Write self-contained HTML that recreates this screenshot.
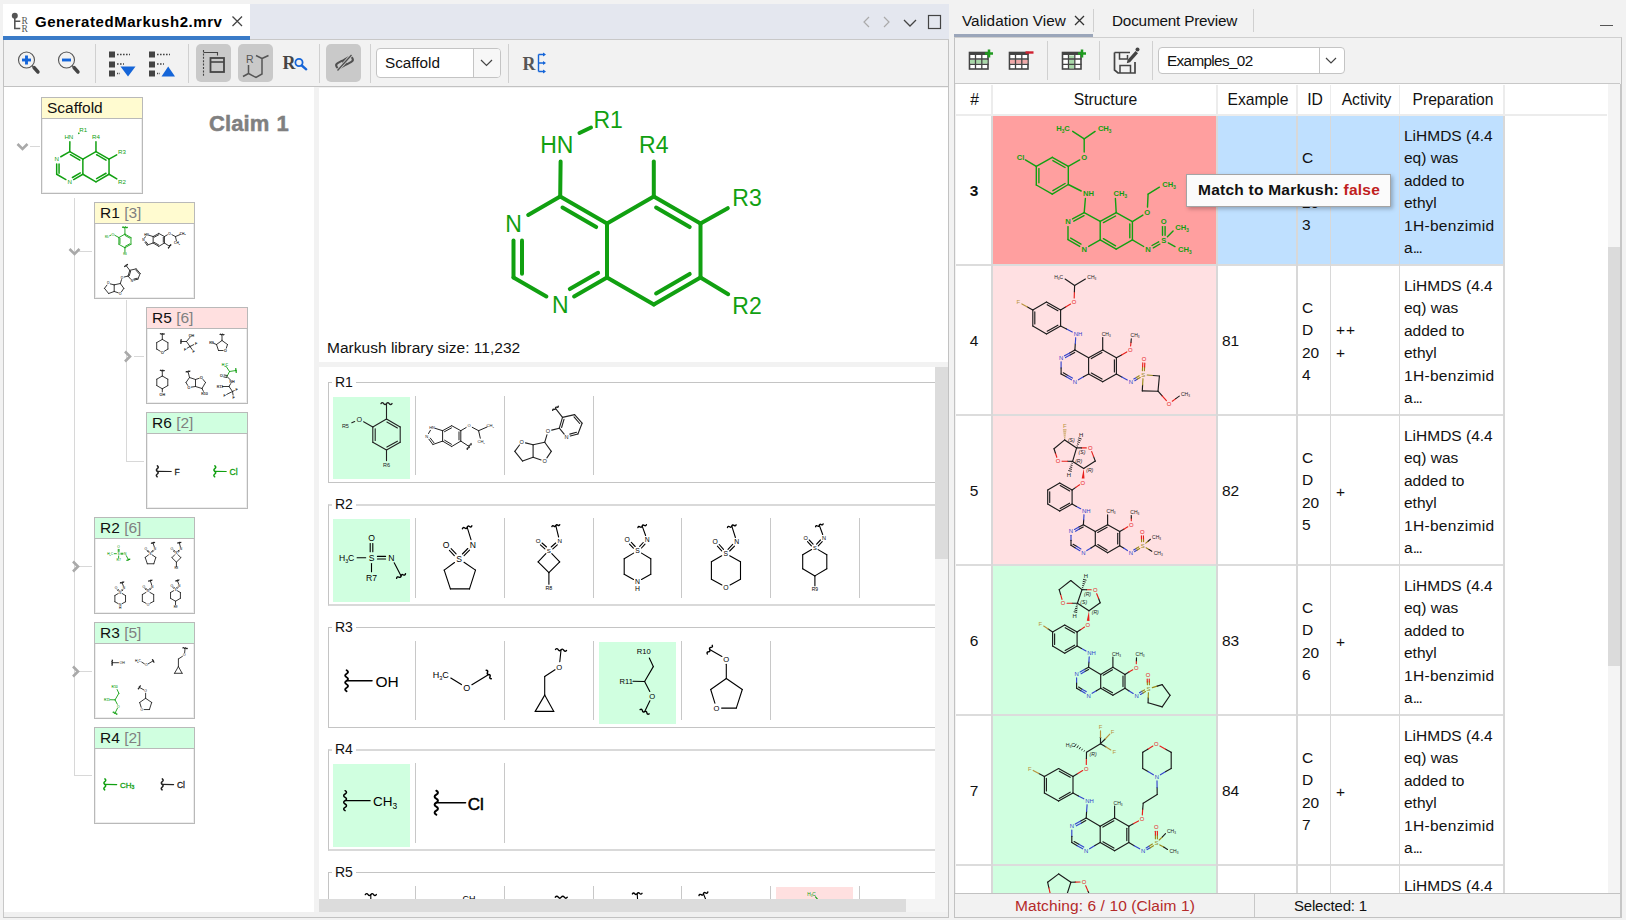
<!DOCTYPE html>
<html><head><meta charset="utf-8"><title>Markush Editor</title>
<style>

*{box-sizing:border-box;margin:0;padding:0}
html,body{width:1626px;height:920px;overflow:hidden;background:#f2f2f2;font-family:"Liberation Sans",sans-serif;font-size:15px;color:#111}
.abs{position:absolute}
div,span,svg{position:absolute}
svg{overflow:visible}
.t{white-space:nowrap;line-height:1}
.sep{width:1px;background:#d0d0d0}
.box{border:1px solid #b9b9b9;background:#fff;box-shadow:inset 0 0 0 1px #ededed}
.hd{left:0;top:0;right:0;height:21px;border-bottom:1px solid #b9b9b9}
.hd .t{left:5px;top:2px;font-size:15.5px}
.hd .n{color:#808080}
.grp{border:1px solid #c4c4c4;border-right:none}
.grp .t{left:3px;top:-8px;background:#fff;padding:0 3px;font-size:14px}
.cs{width:1px;background:#c8c8c8;height:79px}
.cell{width:77px;height:82px}
td,th{}

</style></head>
<body>
<div style="left:3px;top:4px;width:946px;height:36px;background:#e4e7ef"></div>
<div style="left:3px;top:4px;width:247px;height:33px;background:#fff"></div>
<div style="left:3px;top:36px;width:247px;height:4px;background:#3a7bc8"></div>
<div style="left:250px;top:39px;width:699px;height:1px;background:#c8c8c8"></div>
<svg style="left:10px;top:11px" width="22" height="22" viewBox="0 0 22 22"><circle cx="4.8" cy="4.7" r="3" fill="#555"/><path d="M4.8 5v12.5h5.5M4.8 10.3h5.5" stroke="#555" stroke-width="1.6" fill="none"/><text x="11.500" y="12.500" font-family="Liberation Serif,serif" font-size="9.500" fill="#555">R</text><text x="11.500" y="20.500" font-family="Liberation Serif,serif" font-size="9.500" fill="#555">R</text></svg>
<span class="t" id="tabtitle" style="left:35px;top:14px;font-size:15px;font-weight:bold;letter-spacing:0.55px;color:#000">GeneratedMarkush2.mrv</span>
<svg style="left:232px;top:16px" width="12" height="12"><path d="M0.500 0.500l9.500 9.500M10 0.500L0.500 10" stroke="#444" stroke-width="1.300"/></svg>
<svg style="left:858px;top:12px" width="90" height="20"><path d="M11 5l-5 5 5 5" stroke="#aaa" stroke-width="1.2" fill="none"/><path d="M26 5l5 5-5 5" stroke="#aaa" stroke-width="1.2" fill="none"/><path d="M46 8l6 6 6-6" stroke="#444" stroke-width="1.3" fill="none"/><rect x="70.5" y="3.5" width="12" height="13" stroke="#444" stroke-width="1.2" fill="none"/></svg>
<div style="left:3px;top:40px;width:946px;height:47px;background:#f2f2f2;border-bottom:1px solid #c2c2c2;border-left:1px solid #c2c2c2;border-right:1px solid #c2c2c2"></div>
<svg style="left:15px;top:49px" width="30" height="30"><circle cx="11.5" cy="11" r="8" fill="none" stroke="#555" stroke-width="1.1"/><path d="M19 18.500l4 4.500" stroke="#444" stroke-width="3.400" stroke-linecap="round"/><path d="M17 16.500l2 2" stroke="#555" stroke-width="1.200"/><path d="M7 11h9" stroke="#1565d8" stroke-width="2.900"/><path d="M11.500 6.500v9" stroke="#1565d8" stroke-width="2.900"/></svg>
<svg style="left:55px;top:49px" width="30" height="30"><circle cx="11.5" cy="11" r="8" fill="none" stroke="#555" stroke-width="1.1"/><path d="M19 18.500l4 4.500" stroke="#444" stroke-width="3.400" stroke-linecap="round"/><path d="M17 16.500l2 2" stroke="#555" stroke-width="1.200"/><path d="M7 11h9" stroke="#1565d8" stroke-width="2.900"/></svg>
<div class="sep" style="left:95px;top:44px;height:39px"></div>
<div class="sep" style="left:188px;top:44px;height:39px"></div>
<div class="sep" style="left:319px;top:44px;height:39px"></div>
<div class="sep" style="left:370px;top:44px;height:39px"></div>
<div class="sep" style="left:508px;top:44px;height:39px"></div>
<svg style="left:109px;top:50px" width="30" height="28"><rect x="0" y="1.5" width="6" height="6" fill="#444"/><rect x="0" y="11.5" width="6" height="6" fill="#444"/><rect x="0" y="20.5" width="6" height="6" fill="#444"/><path d="M8 4.5h13" stroke="#444" stroke-width="1.6" stroke-dasharray="1.6 1.4"/><path d="M8 14h7" stroke="#444" stroke-width="1.6" stroke-dasharray="1.6 1.4"/><path d="M8 23.5h3" stroke="#444" stroke-width="1.6" stroke-dasharray="1.2 1.2"/><path d="M11.5 16.5h15L19 26.5z" fill="#1565d8"/></svg>
<svg style="left:149px;top:50px" width="30" height="28"><rect x="0" y="1.5" width="6" height="6" fill="#444"/><rect x="0" y="11.5" width="6" height="6" fill="#444"/><rect x="0" y="20.5" width="6" height="6" fill="#444"/><path d="M8 4.5h13" stroke="#444" stroke-width="1.6" stroke-dasharray="1.6 1.4"/><path d="M8 14h7" stroke="#444" stroke-width="1.6" stroke-dasharray="1.6 1.4"/><path d="M8 23.5h3" stroke="#444" stroke-width="1.6" stroke-dasharray="1.2 1.2"/><path d="M12.5 26.5h13.5L19.2 16.5z" fill="#1565d8"/></svg>
<div style="left:196px;top:44px;width:35px;height:38px;background:#c9c9c9;border-radius:5px"></div>
<div style="left:238px;top:44px;width:35px;height:38px;background:#c9c9c9;border-radius:5px"></div>
<div style="left:326px;top:44px;width:35px;height:38px;background:#c9c9c9;border-radius:5px"></div>
<svg style="left:196px;top:44px" width="35" height="38"><path d="M7.5 6v27" stroke="#444" stroke-width="1.1" stroke-dasharray="2 1.4"/><path d="M7.5 8.5h14v3" stroke="#444" stroke-width="1.1" fill="none"/><rect x="14.5" y="14" width="13.5" height="14" fill="none" stroke="#444" stroke-width="1.8"/><path d="M14.5 18h13.5" stroke="#444" stroke-width="1.6"/></svg>
<svg style="left:238px;top:44px" width="35" height="38"><text x="8" y="18.5" font-size="10.5" fill="#555">R</text><path d="M10.5 21v8.5l7.5 4 6-3.5V14.5l-6-3M10.5 29.5l-5.5 3M24 14.5l6.5-3" stroke="#555" stroke-width="1.5" fill="none"/></svg>
<svg style="left:280px;top:50px" width="30" height="26"><text x="2.5" y="19" font-family="Liberation Serif,serif" font-weight="bold" font-size="18" fill="#444">R</text><circle cx="19" cy="12.5" r="3.6" fill="none" stroke="#1565d8" stroke-width="1.8"/><path d="M21.8 15.5l4.4 3.8" stroke="#1565d8" stroke-width="2.4" stroke-linecap="round"/></svg>
<svg style="left:326px;top:44px" width="35" height="38"><g transform="rotate(-28 18.500 18.500)" fill="none" stroke="#505050" stroke-width="2"><rect x="9.500" y="15.800" width="10" height="5.400" rx="2.700"/><rect x="17.500" y="15.800" width="10" height="5.400" rx="2.700"/></g><path d="M11.500 26.500L25.500 11" stroke="#c9c9c9" stroke-width="3.200"/><path d="M11.500 26.500L25.500 11" stroke="#505050" stroke-width="1.300"/></svg>
<div style="left:376px;top:48px;width:125px;height:30px;background:#fff;border:1px solid #c4c4c4;border-radius:4px"></div>
<div style="left:473px;top:49px;width:1px;height:28px;background:#c4c4c4"></div>
<div style="left:474px;top:49px;width:26px;height:28px;background:#f7f7f7;border-radius:0 3px 3px 0"></div>
<span class="t" style="left:385px;top:55px;font-size:15.3px;color:#111">Scaffold</span>
<svg style="left:479px;top:57px" width="16" height="12"><path d="M2 3l5.5 5.5L13 3" stroke="#444" stroke-width="1.2" fill="none"/></svg>
<svg style="left:520px;top:50px" width="30" height="26"><text x="2.5" y="19.5" font-family="Liberation Serif,serif" font-weight="bold" font-size="18" fill="#555">R</text><path d="M18.5 4.500v17M18.500 4.500h6M18.500 13h6M18.5 21.500h6" stroke="#1565d8" stroke-width="1.4" fill="none"/><path d="M23 2.500l3 2-3 2zM23 11l3 2-3 2zM23 19.500l3 2-3 2z" fill="#1565d8"/></svg>
<div style="left:3px;top:87px;width:311px;height:830px;background:#fff;border-left:1px solid #c8c8c8"></div>
<div style="left:3px;top:912px;width:946px;height:6px;background:#f0f0f0;border-bottom:1px solid #c2c2c2;border-left:1px solid #c8c8c8"></div>
<span class="t" style="left:209px;top:112.500px;font-size:22px;font-weight:bold;color:#808080;-webkit-text-stroke:0.500px #808080;letter-spacing:0.100px;word-spacing:1px" id="claim">Claim 1</span>
<div style="left:30px;top:146px;width:10px;height:1px;background:#d8d8d8"></div>
<div style="left:74px;top:198px;width:1px;height:578px;background:#d8d8d8"></div>
<div style="left:79px;top:251px;width:13px;height:1px;background:#d8d8d8"></div>
<div style="left:79px;top:566px;width:13px;height:1px;background:#d8d8d8"></div>
<div style="left:79px;top:671px;width:13px;height:1px;background:#d8d8d8"></div>
<div style="left:74px;top:775px;width:18px;height:1px;background:#d8d8d8"></div>
<div style="left:126px;top:300px;width:1px;height:162px;background:#d8d8d8"></div>
<div style="left:134px;top:356px;width:10px;height:1px;background:#d8d8d8"></div>
<div style="left:126px;top:461px;width:18px;height:1px;background:#d8d8d8"></div>
<svg style="left:16px;top:142px" width="14" height="10"><path d="M1.5 2l5 5 5-5" stroke="#a9a9a9" stroke-width="2.600" fill="none"/></svg>
<svg style="left:68px;top:247px" width="14" height="10"><path d="M1.5 2l5 5 5-5" stroke="#a9a9a9" stroke-width="2.600" fill="none"/></svg>
<svg style="left:123px;top:350px" width="10" height="14"><path d="M2 1.500l5 5-5 5" stroke="#a9a9a9" stroke-width="2.600" fill="none"/></svg>
<svg style="left:71px;top:560px" width="10" height="14"><path d="M2 1.500l5 5-5 5" stroke="#a9a9a9" stroke-width="2.600" fill="none"/></svg>
<svg style="left:71px;top:665px" width="10" height="14"><path d="M2 1.500l5 5-5 5" stroke="#a9a9a9" stroke-width="2.600" fill="none"/></svg>
<div class="box" style="left:41px;top:97px;width:102px;height:97px"><div class="hd" style="background:#fffbd0"><span class="t">Scaffold</span></div><svg style="left:-42px;top:-98px" width="10" height="10"><g transform="translate(90.7,156.2) scale(0.28) translate(-635,-213)" stroke-linecap="round" fill="none"><line x1="560.2" y1="196.5" x2="528.2" y2="215" stroke="#11a011" stroke-width="5.36"/><line x1="513.5" y1="240.5" x2="513.5" y2="277.5" stroke="#11a011" stroke-width="5.36"/><line x1="522" y1="240.5" x2="522" y2="273.8" stroke="#11a011" stroke-width="5.36"/><line x1="513.5" y1="277.5" x2="546.4" y2="296.5" stroke="#11a011" stroke-width="5.36"/><line x1="574.1" y1="296.5" x2="607" y2="277.5" stroke="#11a011" stroke-width="5.36"/><line x1="569.8" y1="289.1" x2="598.1" y2="272.8" stroke="#11a011" stroke-width="5.36"/><line x1="607" y1="277.5" x2="607" y2="223.5" stroke="#11a011" stroke-width="5.36"/><line x1="607" y1="223.5" x2="560.2" y2="196.5" stroke="#11a011" stroke-width="5.36"/><line x1="596.2" y1="227.1" x2="562.5" y2="207.6" stroke="#11a011" stroke-width="5.36"/><line x1="607" y1="223.5" x2="653.8" y2="196.5" stroke="#11a011" stroke-width="5.36"/><line x1="653.8" y1="196.5" x2="700.5" y2="223.5" stroke="#11a011" stroke-width="5.36"/><line x1="656.1" y1="207.6" x2="689.7" y2="227.1" stroke="#11a011" stroke-width="5.36"/><line x1="700.5" y1="223.5" x2="700.5" y2="277.5" stroke="#11a011" stroke-width="5.36"/><line x1="700.5" y1="277.5" x2="653.8" y2="304.5" stroke="#11a011" stroke-width="5.36"/><line x1="689.7" y1="273.9" x2="656.1" y2="293.4" stroke="#11a011" stroke-width="5.36"/><line x1="653.8" y1="304.5" x2="607" y2="277.5" stroke="#11a011" stroke-width="5.36"/><line x1="560.2" y1="196.5" x2="560.6" y2="161.5" stroke="#11a011" stroke-width="5.36"/><line x1="653.8" y1="196.5" x2="653.8" y2="161.5" stroke="#11a011" stroke-width="5.36"/><line x1="700.5" y1="223.5" x2="727.8" y2="208.2" stroke="#11a011" stroke-width="5.36"/><line x1="700.5" y1="277.5" x2="728.2" y2="294.2" stroke="#11a011" stroke-width="5.36"/><text x="513.5" y="231.5" font-size="22.1" fill="#11a011" stroke="none" text-anchor="middle">N</text><text x="560.2" y="312.5" font-size="22.1" fill="#11a011" stroke="none" text-anchor="middle">N</text><text x="557" y="152.5" font-size="22.1" fill="#11a011" stroke="none" text-anchor="middle">HN</text><text x="608.2" y="127.5" font-size="22.1" fill="#11a011" stroke="none" text-anchor="middle">R1</text><text x="653.8" y="152.5" font-size="22.1" fill="#11a011" stroke="none" text-anchor="middle">R4</text><text x="747" y="205.5" font-size="22.1" fill="#11a011" stroke="none" text-anchor="middle">R3</text><text x="747" y="313.5" font-size="22.1" fill="#11a011" stroke="none" text-anchor="middle">R2</text></g><line x1="78.200" y1="133.600" x2="79.400" y2="133" stroke="#11a011" stroke-width="1.500"/></svg></div>
<div class="box" style="left:94px;top:202px;width:101px;height:97px"><div class="hd" style="background:#fffbd0"><span class="t">R1 <span class="n" style="position:static">[3]</span></span></div><svg style="left:-95px;top:-203px" width="10" height="10"><g transform="translate(118.9,240.8) scale(0.44) translate(-372.8,-434.3)" stroke-linecap="round" fill="none"><line x1="386.5" y1="419.1" x2="400.2" y2="426.9" stroke="#11a011" stroke-width="2.05"/><line x1="386.9" y1="422.1" x2="397.4" y2="428" stroke="#11a011" stroke-width="2.05"/><line x1="400.2" y1="426.9" x2="400.2" y2="442.3" stroke="#11a011" stroke-width="2.05"/><line x1="400.2" y1="442.3" x2="386.5" y2="450.1" stroke="#11a011" stroke-width="2.05"/><line x1="397.4" y1="441.2" x2="386.9" y2="447.1" stroke="#11a011" stroke-width="2.05"/><line x1="386.5" y1="450.1" x2="372.8" y2="442.3" stroke="#11a011" stroke-width="2.05"/><line x1="372.8" y1="442.3" x2="372.8" y2="426.9" stroke="#11a011" stroke-width="2.05"/><line x1="375.2" y1="440.5" x2="375.2" y2="428.7" stroke="#11a011" stroke-width="2.05"/><line x1="372.8" y1="426.9" x2="386.5" y2="419.1" stroke="#11a011" stroke-width="2.05"/><line x1="386.5" y1="419.1" x2="386.5" y2="403.6" stroke="#11a011" stroke-width="2.05"/><path d="M392 403.6 Q390.6 405.5 389.2 403.6 Q387.8 401.7 386.5 403.6 Q385.1 405.5 383.7 403.6 Q382.3 401.7 381 403.6" stroke="#11a011" stroke-width="2.56"/><line x1="372.8" y1="426.9" x2="363.6" y2="421.8" stroke="#11a011" stroke-width="2.05"/><line x1="354.7" y1="421.5" x2="351.8" y2="422.8" stroke="#11a011" stroke-width="2.05"/><line x1="386.5" y1="450.1" x2="386.5" y2="460.1" stroke="#11a011" stroke-width="2.05"/><text x="359.2" y="422.3" font-size="8" fill="#11a011" stroke="#11a011" text-anchor="middle" stroke-width="0.12">O</text><text x="345.4" y="427.9" font-size="6.2" fill="#11a011" stroke="#11a011" text-anchor="middle" stroke-width="0.12">R5</text><text x="386.5" y="467.3" font-size="6.2" fill="#11a011" stroke="#11a011" text-anchor="middle" stroke-width="0.12">R6</text></g><g transform="translate(163,239.9) scale(0.62) translate(-458.5,-436.1)" stroke-linecap="round" fill="none"><line x1="451.7" y1="425.7" x2="460.8" y2="430.7" stroke="#222" stroke-width="1.45"/><line x1="460.8" y1="430.7" x2="460.8" y2="441.1" stroke="#222" stroke-width="1.45"/><line x1="459" y1="431.9" x2="459" y2="439.9" stroke="#222" stroke-width="1.45"/><line x1="460.8" y1="441.1" x2="451.7" y2="446.5" stroke="#222" stroke-width="1.45"/><line x1="451.7" y1="446.5" x2="442.6" y2="441.1" stroke="#222" stroke-width="1.45"/><line x1="451.5" y1="444.3" x2="444.6" y2="440.2" stroke="#222" stroke-width="1.45"/><line x1="442.6" y1="441.1" x2="442.6" y2="430.7" stroke="#222" stroke-width="1.45"/><line x1="442.6" y1="430.7" x2="451.7" y2="425.7" stroke="#222" stroke-width="1.45"/><line x1="444.5" y1="431.7" x2="451.5" y2="427.9" stroke="#222" stroke-width="1.45"/><line x1="442.6" y1="430.7" x2="436.2" y2="428.7" stroke="#222" stroke-width="1.45"/><line x1="430" y1="431.1" x2="429" y2="432.8" stroke="#222" stroke-width="1.45"/><line x1="429.4" y1="439.9" x2="432.9" y2="444.5" stroke="#222" stroke-width="1.45"/><line x1="430.8" y1="438.8" x2="434" y2="442.8" stroke="#222" stroke-width="1.45"/><line x1="432.9" y1="444.5" x2="442.6" y2="441.1" stroke="#222" stroke-width="1.45"/><line x1="460.8" y1="430.7" x2="465.5" y2="427.9" stroke="#222" stroke-width="1.45"/><line x1="472.9" y1="427.7" x2="478.6" y2="430.7" stroke="#222" stroke-width="1.45"/><line x1="478.6" y1="430.7" x2="486.3" y2="427.4" stroke="#222" stroke-width="1.45"/><line x1="478.6" y1="430.7" x2="480.1" y2="437.3" stroke="#222" stroke-width="1.45"/><line x1="460.8" y1="441.1" x2="469.1" y2="446.5" stroke="#222" stroke-width="1.45"/><path d="M467.3 449.4 Q466.7 448 468.2 447.9 Q469.7 447.8 469.1 446.5 Q468.6 445.1 470.1 445 Q471.6 444.9 471 443.5" stroke="#222" stroke-width="1.81"/><text x="432.1" y="429.2" font-size="5.2" fill="#222" stroke="#222" text-anchor="middle" stroke-width="0.12">HN</text><text x="426.8" y="438.4" font-size="5.2" fill="#222" stroke="#222" text-anchor="middle" stroke-width="0.12">N</text><text x="469.1" y="427.6" font-size="5.2" fill="#222" stroke="#222" text-anchor="middle" stroke-width="0.12">O</text><text x="490.2" y="427.6" font-size="5.2" fill="#222" stroke="#222" text-anchor="middle" stroke-width="0.12">CH<tspan font-size="3.2" dy="1.1">3</tspan></text><text x="481.1" y="443.3" font-size="5.2" fill="#222" stroke="#222" text-anchor="middle" stroke-width="0.12">CH<tspan font-size="3.2" dy="1.1">3</tspan></text></g><g transform="translate(122.3,279.5) scale(0.53) translate(-548.4,-434.7)" stroke-linecap="round" fill="none"><line x1="562.5" y1="417.4" x2="574.6" y2="414.6" stroke="#222" stroke-width="1.7"/><line x1="574.6" y1="414.6" x2="582.1" y2="423.2" stroke="#222" stroke-width="1.7"/><line x1="574" y1="416.9" x2="579.7" y2="423.5" stroke="#222" stroke-width="1.7"/><line x1="582.1" y1="423.2" x2="577.9" y2="434" stroke="#222" stroke-width="1.7"/><line x1="577.9" y1="434" x2="570.6" y2="435.9" stroke="#222" stroke-width="1.7"/><line x1="576.5" y1="432.3" x2="570.1" y2="434" stroke="#222" stroke-width="1.7"/><line x1="564" y1="433.8" x2="559.3" y2="428.2" stroke="#222" stroke-width="1.7"/><line x1="559.3" y1="428.2" x2="562.5" y2="417.4" stroke="#222" stroke-width="1.7"/><line x1="561.6" y1="427.5" x2="564" y2="419.3" stroke="#222" stroke-width="1.7"/><line x1="562.5" y1="417.4" x2="555.5" y2="408.3" stroke="#222" stroke-width="1.7"/><path d="M558.3 406.1 Q558.3 407.6 556.9 407.2 Q555.5 406.8 555.5 408.3 Q555.5 409.7 554.1 409.3 Q552.7 408.9 552.7 410.4" stroke="#222" stroke-width="2.12"/><line x1="559.3" y1="428.2" x2="552" y2="430" stroke="#222" stroke-width="1.7"/><line x1="546.9" y1="435" x2="544.7" y2="442.3" stroke="#222" stroke-width="1.7"/><line x1="544.7" y1="442.3" x2="551.3" y2="451.4" stroke="#222" stroke-width="1.7"/><line x1="551.3" y1="451.4" x2="547" y2="457.7" stroke="#222" stroke-width="1.7"/><line x1="540.8" y1="459.8" x2="533.1" y2="457.3" stroke="#222" stroke-width="1.7"/><line x1="533.1" y1="457.3" x2="533.1" y2="444.8" stroke="#222" stroke-width="1.7"/><line x1="533.1" y1="444.8" x2="544.7" y2="442.3" stroke="#222" stroke-width="1.7"/><line x1="533.1" y1="444.8" x2="525.8" y2="443" stroke="#222" stroke-width="1.7"/><line x1="519.4" y1="445.3" x2="514.8" y2="451.4" stroke="#222" stroke-width="1.7"/><line x1="514.8" y1="451.4" x2="522.6" y2="461.1" stroke="#222" stroke-width="1.7"/><line x1="522.6" y1="461.1" x2="533.1" y2="457.3" stroke="#222" stroke-width="1.7"/><text x="566.6" y="439.2" font-size="6" fill="#222" stroke="#222" text-anchor="middle" stroke-width="0.12">N</text><text x="548" y="433.2" font-size="6" fill="#222" stroke="#222" text-anchor="middle" stroke-width="0.12">O</text><text x="544.7" y="463.2" font-size="6" fill="#222" stroke="#222" text-anchor="middle" stroke-width="0.12">O</text><text x="521.8" y="444.1" font-size="6" fill="#222" stroke="#222" text-anchor="middle" stroke-width="0.12">O</text></g></svg></div>
<div class="box" style="left:146px;top:307px;width:102px;height:97px"><div class="hd" style="background:#ffe0e0"><span class="t">R5 <span class="n" style="position:static">[6]</span></span></div><svg style="left:-147px;top:-308px" width="10" height="10"><g stroke-linecap="round" fill="none"><line x1="162.3" y1="339.4" x2="167.9" y2="342.6" stroke="#222" stroke-width="0.9"/><line x1="167.9" y1="342.6" x2="167.9" y2="349.1" stroke="#222" stroke-width="0.9"/><line x1="167.9" y1="349.1" x2="164.4" y2="351.2" stroke="#222" stroke-width="0.9"/><line x1="160.2" y1="351.2" x2="156.7" y2="349.1" stroke="#222" stroke-width="0.9"/><line x1="156.7" y1="349.1" x2="156.7" y2="342.6" stroke="#222" stroke-width="0.9"/><line x1="156.7" y1="342.6" x2="162.3" y2="339.4" stroke="#222" stroke-width="0.9"/><line x1="162.3" y1="339.4" x2="162.3" y2="333.9" stroke="#222" stroke-width="0.9"/><path d="M164.3 333.9 Q163.8 334.6 163.3 333.9 Q162.8 333.2 162.3 333.9 Q161.8 334.6 161.3 333.9 Q160.8 333.2 160.3 333.9" stroke="#222" stroke-width="1.12"/><text x="162.3" y="353.7" font-size="3.6" fill="#222" stroke="#222" text-anchor="middle" stroke-width="0.12">O</text></g><g stroke-linecap="round" fill="none"><line x1="181" y1="341.5" x2="186.5" y2="341.5" stroke="#222" stroke-width="0.9"/><path d="M181 339.5 Q181.7 340 181 340.5 Q180.3 341 181 341.5 Q181.7 342 181 342.5 Q180.3 343 181 343.5" stroke="#222" stroke-width="1.12"/><line x1="186.5" y1="341.5" x2="189.9" y2="337.4" stroke="#222" stroke-width="0.9"/><line x1="186.5" y1="341.5" x2="190" y2="346.5" stroke="#222" stroke-width="0.9"/><line x1="190" y1="346.5" x2="193.8" y2="344.6" stroke="#222" stroke-width="0.9"/><line x1="190" y1="346.5" x2="187.1" y2="348.2" stroke="#222" stroke-width="0.9"/><line x1="190" y1="346.5" x2="192.1" y2="349.5" stroke="#222" stroke-width="0.9"/><text x="191.5" y="336.8" font-size="3.6" fill="#222" stroke="#222" text-anchor="middle" stroke-width="0.12">OH</text><text x="196" y="344.8" font-size="3.6" fill="#222" stroke="#222" text-anchor="middle" stroke-width="0.12">F</text><text x="185" y="350.8" font-size="3.6" fill="#222" stroke="#222" text-anchor="middle" stroke-width="0.12">F</text><text x="193.5" y="352.8" font-size="3.6" fill="#222" stroke="#222" text-anchor="middle" stroke-width="0.12">F</text></g><g stroke-linecap="round" fill="none"><line x1="222" y1="334.5" x2="222" y2="340.5" stroke="#222" stroke-width="0.9"/><path d="M224 334.5 Q223.5 335.2 223 334.5 Q222.5 333.8 222 334.5 Q221.5 335.2 221 334.5 Q220.5 333.8 220 334.5" stroke="#222" stroke-width="1.12"/><line x1="222" y1="340.5" x2="227.5" y2="344.5" stroke="#222" stroke-width="0.9"/><line x1="227.5" y1="344.5" x2="226.3" y2="348.2" stroke="#222" stroke-width="0.9"/><line x1="223.1" y1="350.5" x2="218.5" y2="350.5" stroke="#222" stroke-width="0.9"/><line x1="218.5" y1="350.5" x2="216.5" y2="344.5" stroke="#222" stroke-width="0.9"/><line x1="216.5" y1="344.5" x2="222" y2="340.5" stroke="#222" stroke-width="0.9"/><line x1="216.5" y1="344.5" x2="213.8" y2="343.4" stroke="#222" stroke-width="0.9"/><text x="225.5" y="351.8" font-size="3.6" fill="#222" stroke="#222" text-anchor="middle" stroke-width="0.12">O</text><text x="211.5" y="343.8" font-size="3.6" fill="#222" stroke="#222" text-anchor="middle" stroke-width="0.12">R9</text></g><g stroke-linecap="round" fill="none"><line x1="162.3" y1="376" x2="167.8" y2="379.2" stroke="#222" stroke-width="0.9"/><line x1="167.8" y1="379.2" x2="167.8" y2="385.6" stroke="#222" stroke-width="0.9"/><line x1="167.8" y1="385.6" x2="162.3" y2="388.8" stroke="#222" stroke-width="0.9"/><line x1="162.3" y1="388.8" x2="156.8" y2="385.6" stroke="#222" stroke-width="0.9"/><line x1="156.8" y1="385.6" x2="156.8" y2="379.2" stroke="#222" stroke-width="0.9"/><line x1="156.8" y1="379.2" x2="162.3" y2="376" stroke="#222" stroke-width="0.9"/><line x1="162.3" y1="376" x2="162.3" y2="370.5" stroke="#222" stroke-width="0.9"/><path d="M164.3 370.5 Q163.8 371.2 163.3 370.5 Q162.8 369.8 162.3 370.5 Q161.8 371.2 161.3 370.5 Q160.8 369.8 160.3 370.5" stroke="#222" stroke-width="1.12"/><line x1="162.3" y1="388.8" x2="162.3" y2="391.9" stroke="#222" stroke-width="0.9"/><text x="162.3" y="395.6" font-size="3.6" fill="#222" stroke="#222" text-anchor="middle" stroke-width="0.12">OH</text></g><g stroke-linecap="round" fill="none"><line x1="188" y1="371.5" x2="189.5" y2="377.5" stroke="#222" stroke-width="0.9"/><path d="M189.9 371 Q189.6 371.8 189 371.3 Q188.3 370.7 188 371.5 Q187.7 372.3 187 371.7 Q186.4 371.2 186.1 372" stroke="#222" stroke-width="1.12"/><line x1="189.5" y1="377.5" x2="195.5" y2="379.5" stroke="#222" stroke-width="0.9"/><line x1="195.5" y1="379.5" x2="195.5" y2="386.5" stroke="#222" stroke-width="0.9"/><line x1="195.5" y1="386.5" x2="191.4" y2="387.1" stroke="#222" stroke-width="0.9"/><line x1="187.7" y1="385.4" x2="186" y2="382.5" stroke="#222" stroke-width="0.9"/><line x1="186" y1="382.5" x2="189.5" y2="377.5" stroke="#222" stroke-width="0.9"/><line x1="195.5" y1="379.5" x2="199.2" y2="378.3" stroke="#222" stroke-width="0.9"/><line x1="203" y1="379.4" x2="205.5" y2="382.5" stroke="#222" stroke-width="0.9"/><line x1="205.5" y1="382.5" x2="202" y2="388.5" stroke="#222" stroke-width="0.9"/><line x1="202" y1="388.5" x2="195.5" y2="386.5" stroke="#222" stroke-width="0.9"/><line x1="202" y1="388.5" x2="203.4" y2="391.3" stroke="#222" stroke-width="0.9"/><text x="189" y="388.8" font-size="3.6" fill="#222" stroke="#222" text-anchor="middle" stroke-width="0.12">O</text><text x="201.5" y="378.8" font-size="3.6" fill="#222" stroke="#222" text-anchor="middle" stroke-width="0.12">O</text><text x="204.5" y="394.8" font-size="3.6" fill="#222" stroke="#222" text-anchor="middle" stroke-width="0.12">R10</text></g><g stroke-linecap="round" fill="none"><line x1="236" y1="370.5" x2="229.5" y2="371.5" stroke="#11a011" stroke-width="0.9"/><path d="M236.3 372.5 Q235.6 372.1 236.2 371.5 Q236.7 370.9 236 370.5 Q235.3 370.1 235.8 369.5 Q236.4 368.9 235.7 368.5" stroke="#11a011" stroke-width="1.12"/><line x1="229.5" y1="371.5" x2="227" y2="376.5" stroke="#11a011" stroke-width="0.9"/><line x1="229.5" y1="371.5" x2="226.3" y2="366.6" stroke="#11a011" stroke-width="0.9"/><line x1="227.2" y1="375.5" x2="224.1" y2="375" stroke="#222" stroke-width="0.9"/><line x1="226.8" y1="377.5" x2="223.7" y2="376.9" stroke="#222" stroke-width="0.9"/><line x1="227" y1="376.5" x2="230.3" y2="379.8" stroke="#222" stroke-width="0.9"/><line x1="230.7" y1="383.6" x2="229" y2="386.5" stroke="#222" stroke-width="0.9"/><line x1="229" y1="386.5" x2="222.4" y2="386.5" stroke="#222" stroke-width="0.9"/><line x1="229" y1="386.5" x2="232.5" y2="391.5" stroke="#222" stroke-width="0.9"/><line x1="232.5" y1="391.5" x2="234.3" y2="390.6" stroke="#222" stroke-width="0.9"/><line x1="232.5" y1="391.5" x2="226.7" y2="394.4" stroke="#222" stroke-width="0.9"/><line x1="232.5" y1="391.5" x2="233.1" y2="395.1" stroke="#222" stroke-width="0.9"/><text x="225" y="365.8" font-size="3.6" fill="#11a011" stroke="#11a011" text-anchor="middle" stroke-width="0.12">H<tspan font-size="2.2" dy="0.8">3</tspan><tspan dy="-0.8">C</tspan></text><text x="221.5" y="376.8" font-size="3.6" fill="#222" stroke="#222" text-anchor="middle" stroke-width="0.12">O</text><text x="232" y="382.8" font-size="3.6" fill="#222" stroke="#222" text-anchor="middle" stroke-width="0.12">NH</text><text x="220" y="387.8" font-size="3.6" fill="#222" stroke="#222" text-anchor="middle" stroke-width="0.12">R11</text><text x="236.5" y="390.8" font-size="3.6" fill="#222" stroke="#222" text-anchor="middle" stroke-width="0.12">F</text><text x="224.5" y="396.8" font-size="3.6" fill="#222" stroke="#222" text-anchor="middle" stroke-width="0.12">F</text><text x="233.5" y="398.8" font-size="3.6" fill="#222" stroke="#222" text-anchor="middle" stroke-width="0.12">F</text></g></svg></div>
<div class="box" style="left:146px;top:412px;width:102px;height:97px"><div class="hd" style="background:#d0ffe0"><span class="t">R6 <span class="n" style="position:static">[2]</span></span></div><svg style="left:-147px;top:-413px" width="10" height="10"><g stroke-linecap="round" fill="none"><line x1="157.3" y1="471.3" x2="171.2" y2="471.5" stroke="#222" stroke-width="1.2"/><path d="M157.4 465.8 Q159.2 467.2 157.3 468.6 Q155.5 469.9 157.3 471.3 Q159.1 472.7 157.3 474 Q155.4 475.4 157.2 476.8" stroke="#222" stroke-width="1.5"/><text x="174.5" y="474.7" font-size="8.5" fill="#222" stroke="#222" text-anchor="start" stroke-width="0.3">F</text></g><g stroke-linecap="round" fill="none"><line x1="214.8" y1="471.3" x2="226.2" y2="471.5" stroke="#11a011" stroke-width="1.2"/><path d="M214.9 465.8 Q216.7 467.2 214.8 468.6 Q213 469.9 214.8 471.3 Q216.6 472.7 214.8 474 Q212.9 475.4 214.7 476.8" stroke="#11a011" stroke-width="1.5"/><text x="229.5" y="474.7" font-size="8.5" fill="#11a011" stroke="#11a011" text-anchor="start" stroke-width="0.3">Cl</text></g></svg></div>
<div class="box" style="left:94px;top:517px;width:101px;height:97px"><div class="hd" style="background:#d0ffe0"><span class="t">R2 <span class="n" style="position:static">[6]</span></span></div><svg style="left:-95px;top:-518px" width="10" height="10"><g transform="translate(120.2,553.7) scale(0.33) translate(-376.2,-557.7)" stroke-linecap="round" fill="none"><line x1="372.8" y1="550.9" x2="372.8" y2="544.5" stroke="#11a011" stroke-width="2.73"/><line x1="370.2" y1="550.9" x2="370.2" y2="544.5" stroke="#11a011" stroke-width="2.73"/><line x1="378.3" y1="559" x2="384.6" y2="559" stroke="#11a011" stroke-width="2.73"/><line x1="378.3" y1="556.4" x2="384.6" y2="556.4" stroke="#11a011" stroke-width="2.73"/><line x1="358" y1="557.7" x2="364.7" y2="557.7" stroke="#11a011" stroke-width="2.73"/><line x1="371.5" y1="564.5" x2="371.5" y2="570.8" stroke="#11a011" stroke-width="2.73"/><line x1="394.6" y1="563.7" x2="401.1" y2="575.9" stroke="#11a011" stroke-width="2.73"/><path d="M396.6 578.3 Q397 576.2 398.9 577.1 Q400.8 578 401.1 575.9 Q401.4 573.8 403.3 574.8 Q405.2 575.7 405.5 573.6" stroke="#11a011" stroke-width="3.41"/><text x="371.5" y="561.3" font-size="10" fill="#11a011" stroke="#11a011" text-anchor="middle" stroke-width="0.12">S</text><text x="371.5" y="541.3" font-size="10" fill="#11a011" stroke="#11a011" text-anchor="middle" stroke-width="0.12">O</text><text x="391.4" y="561.3" font-size="10" fill="#11a011" stroke="#11a011" text-anchor="middle" stroke-width="0.12">N</text><text x="354.8" y="561.3" font-size="10" fill="#11a011" stroke="#11a011" text-anchor="end" stroke-width="0.12">H<tspan font-size="6.2" dy="2.2">3</tspan><tspan dy="-2.2">C</tspan></text><text x="371.5" y="581.2" font-size="10" fill="#11a011" stroke="#11a011" text-anchor="middle" stroke-width="0.12">R7</text></g><g transform="translate(150.5,553.3) scale(0.34) translate(-459.8,-558.1)" stroke-linecap="round" fill="none"><line x1="464.6" y1="562.7" x2="475.5" y2="570.1" stroke="#222" stroke-width="2.65"/><line x1="475.5" y1="570.1" x2="469.5" y2="588.9" stroke="#222" stroke-width="2.65"/><line x1="469.5" y1="588.9" x2="450.4" y2="588.9" stroke="#222" stroke-width="2.65"/><line x1="450.4" y1="588.9" x2="444.2" y2="570.1" stroke="#222" stroke-width="2.65"/><line x1="444.2" y1="570.1" x2="453.9" y2="562.9" stroke="#222" stroke-width="2.65"/><line x1="455.5" y1="553.4" x2="451.6" y2="549.2" stroke="#222" stroke-width="2.65"/><line x1="453.8" y1="555" x2="449.9" y2="550.8" stroke="#222" stroke-width="2.65"/><line x1="464.7" y1="555.1" x2="469" y2="550.8" stroke="#222" stroke-width="2.65"/><line x1="463" y1="553.5" x2="467.3" y2="549.1" stroke="#222" stroke-width="2.65"/><line x1="470.8" y1="538.9" x2="467.2" y2="527.3" stroke="#222" stroke-width="2.65"/><path d="M471.9 525.8 Q471.2 527.8 469.5 526.5 Q467.8 525.3 467.2 527.3 Q466.5 529.3 464.8 528 Q463.1 526.8 462.4 528.8" stroke="#222" stroke-width="3.31"/><text x="459.2" y="562.5" font-size="9.7" fill="#222" stroke="#222" text-anchor="middle" stroke-width="0.12">S</text><text x="446.2" y="548.7" font-size="9.7" fill="#222" stroke="#222" text-anchor="middle" stroke-width="0.12">O</text><text x="472.8" y="548.7" font-size="9.7" fill="#222" stroke="#222" text-anchor="middle" stroke-width="0.12">N</text></g><g transform="translate(176.4,555.6) scale(0.415) translate(-548.9,-556.8)" stroke-linecap="round" fill="none"><line x1="552.6" y1="554.6" x2="559.7" y2="561.8" stroke="#222" stroke-width="2.17"/><line x1="559.7" y1="561.8" x2="548.9" y2="572.6" stroke="#222" stroke-width="2.17"/><line x1="548.9" y1="572.6" x2="538.1" y2="561.8" stroke="#222" stroke-width="2.17"/><line x1="538.1" y1="561.8" x2="545.1" y2="554.6" stroke="#222" stroke-width="2.17"/><line x1="545.6" y1="546.2" x2="542.9" y2="543.8" stroke="#222" stroke-width="2.17"/><line x1="544" y1="548" x2="541.3" y2="545.6" stroke="#222" stroke-width="2.17"/><line x1="553.7" y1="548" x2="556.4" y2="545.6" stroke="#222" stroke-width="2.17"/><line x1="552.1" y1="546.2" x2="554.8" y2="543.8" stroke="#222" stroke-width="2.17"/><line x1="558.4" y1="535.8" x2="555.8" y2="525.6" stroke="#222" stroke-width="2.17"/><path d="M559.7 524.7 Q559.1 526.2 557.8 525.1 Q556.5 524.1 555.8 525.6 Q555.2 527.2 553.9 526.1 Q552.6 525 551.9 526.6" stroke="#222" stroke-width="2.71"/><line x1="548.9" y1="572.6" x2="548.9" y2="583.3" stroke="#222" stroke-width="2.17"/><text x="548.9" y="553.6" font-size="8" fill="#222" stroke="#222" text-anchor="middle" stroke-width="0.12">S</text><text x="538.1" y="543.9" font-size="8" fill="#222" stroke="#222" text-anchor="middle" stroke-width="0.12">O</text><text x="559.7" y="543.9" font-size="8" fill="#222" stroke="#222" text-anchor="middle" stroke-width="0.12">N</text><text x="548.9" y="590.3" font-size="6.8" fill="#222" stroke="#222" text-anchor="middle" stroke-width="0.12">R8</text></g><g transform="translate(120.2,593.6) scale(0.4) translate(-637.5,-553.9)" stroke-linecap="round" fill="none"><line x1="642.3" y1="553.6" x2="650.8" y2="558.8" stroke="#222" stroke-width="2.25"/><line x1="650.8" y1="558.8" x2="650.8" y2="574.3" stroke="#222" stroke-width="2.25"/><line x1="650.8" y1="574.3" x2="642.4" y2="579" stroke="#222" stroke-width="2.25"/><line x1="632.6" y1="579" x2="624.2" y2="574.3" stroke="#222" stroke-width="2.25"/><line x1="624.2" y1="574.3" x2="624.2" y2="558.8" stroke="#222" stroke-width="2.25"/><line x1="624.2" y1="558.8" x2="632.7" y2="553.6" stroke="#222" stroke-width="2.25"/><line x1="634.5" y1="545.8" x2="632" y2="543.1" stroke="#222" stroke-width="2.25"/><line x1="632.8" y1="547.5" x2="630.2" y2="544.8" stroke="#222" stroke-width="2.25"/><line x1="642.1" y1="547.3" x2="644.3" y2="544.9" stroke="#222" stroke-width="2.25"/><line x1="640.3" y1="545.7" x2="642.5" y2="543.3" stroke="#222" stroke-width="2.25"/><line x1="645.2" y1="534.6" x2="642.2" y2="526.1" stroke="#222" stroke-width="2.25"/><path d="M646.4 524.6 Q645.9 526.4 644.3 525.4 Q642.7 524.3 642.2 526.1 Q641.6 527.9 640 526.9 Q638.5 525.8 637.9 527.6" stroke="#222" stroke-width="2.81"/><text x="637.5" y="591.9" font-size="8.2" fill="#222" stroke="#222" text-anchor="middle" stroke-width="0.12">H</text><text x="637.5" y="553.7" font-size="8.2" fill="#222" stroke="#222" text-anchor="middle" stroke-width="0.12">S</text><text x="627.2" y="542.9" font-size="8.2" fill="#222" stroke="#222" text-anchor="middle" stroke-width="0.12">O</text><text x="647.1" y="542.9" font-size="8.2" fill="#222" stroke="#222" text-anchor="middle" stroke-width="0.12">N</text><text x="637.5" y="584.7" font-size="8.2" fill="#222" stroke="#222" text-anchor="middle" stroke-width="0.12">N</text></g><g transform="translate(148,592.5) scale(0.39) translate(-725.9,-556.6)" stroke-linecap="round" fill="none"><line x1="730.7" y1="556.3" x2="740.5" y2="561.8" stroke="#222" stroke-width="2.31"/><line x1="740.5" y1="561.8" x2="740.5" y2="579.3" stroke="#222" stroke-width="2.31"/><line x1="740.5" y1="579.3" x2="731.1" y2="584.3" stroke="#222" stroke-width="2.31"/><line x1="720.9" y1="584.3" x2="711.4" y2="579.3" stroke="#222" stroke-width="2.31"/><line x1="711.4" y1="579.3" x2="711.4" y2="561.8" stroke="#222" stroke-width="2.31"/><line x1="711.4" y1="561.8" x2="720.7" y2="556.4" stroke="#222" stroke-width="2.31"/><line x1="722.7" y1="548.4" x2="720" y2="545.4" stroke="#222" stroke-width="2.31"/><line x1="720.9" y1="550" x2="718.2" y2="547" stroke="#222" stroke-width="2.31"/><line x1="730.5" y1="550.2" x2="733.7" y2="546.9" stroke="#222" stroke-width="2.31"/><line x1="728.8" y1="548.5" x2="732" y2="545.2" stroke="#222" stroke-width="2.31"/><line x1="735.1" y1="536.4" x2="731.8" y2="526.1" stroke="#222" stroke-width="2.31"/><path d="M736.1 524.8 Q735.5 526.6 734 525.4 Q732.4 524.3 731.8 526.1 Q731.2 527.9 729.7 526.8 Q728.1 525.7 727.5 527.5" stroke="#222" stroke-width="2.88"/><text x="725.7" y="556.6" font-size="8.5" fill="#222" stroke="#222" text-anchor="middle" stroke-width="0.12">S</text><text x="715.2" y="544.9" font-size="8.5" fill="#222" stroke="#222" text-anchor="middle" stroke-width="0.12">O</text><text x="736.8" y="544.9" font-size="8.5" fill="#222" stroke="#222" text-anchor="middle" stroke-width="0.12">N</text><text x="726" y="590.1" font-size="8.5" fill="#222" stroke="#222" text-anchor="middle" stroke-width="0.12">O</text></g><g transform="translate(175.5,593.6) scale(0.41) translate(-814.8,-557.3)" stroke-linecap="round" fill="none"><line x1="819.6" y1="550.5" x2="826.8" y2="554.7" stroke="#222" stroke-width="2.2"/><line x1="826.8" y1="554.7" x2="826.8" y2="568.8" stroke="#222" stroke-width="2.2"/><line x1="826.8" y1="568.8" x2="814.9" y2="575.9" stroke="#222" stroke-width="2.2"/><line x1="814.9" y1="575.9" x2="802.7" y2="568.8" stroke="#222" stroke-width="2.2"/><line x1="802.7" y1="568.8" x2="802.7" y2="554.7" stroke="#222" stroke-width="2.2"/><line x1="802.7" y1="554.7" x2="810.1" y2="550.4" stroke="#222" stroke-width="2.2"/><line x1="812" y1="542.9" x2="810.4" y2="541.2" stroke="#222" stroke-width="2.2"/><line x1="810.2" y1="544.6" x2="808.6" y2="542.9" stroke="#222" stroke-width="2.2"/><line x1="819.5" y1="544.6" x2="821.1" y2="542.9" stroke="#222" stroke-width="2.2"/><line x1="817.8" y1="542.9" x2="819.4" y2="541.2" stroke="#222" stroke-width="2.2"/><line x1="822.1" y1="532.9" x2="819.3" y2="525.3" stroke="#222" stroke-width="2.2"/><path d="M823.1 523.9 Q822.6 525.5 821.2 524.6 Q819.8 523.7 819.3 525.3 Q818.9 526.9 817.5 526 Q816.1 525 815.6 526.7" stroke="#222" stroke-width="2.74"/><line x1="814.9" y1="575.9" x2="814.9" y2="584.3" stroke="#222" stroke-width="2.2"/><text x="814.9" y="550.6" font-size="8" fill="#222" stroke="#222" text-anchor="middle" stroke-width="0.12">S</text><text x="805.7" y="541" font-size="8" fill="#222" stroke="#222" text-anchor="middle" stroke-width="0.12">O</text><text x="824" y="541" font-size="8" fill="#222" stroke="#222" text-anchor="middle" stroke-width="0.12">N</text><text x="814.9" y="591.8" font-size="7.2" fill="#222" stroke="#222" text-anchor="middle" stroke-width="0.12">R9</text></g></svg></div>
<div class="box" style="left:94px;top:622px;width:101px;height:97px"><div class="hd" style="background:#d0ffe0"><span class="t">R3 <span class="n" style="position:static">[5]</span></span></div><svg style="left:-95px;top:-623px" width="10" height="10"><g transform="translate(116.5,662.7) scale(0.25) translate(-364,-680.7)" stroke-linecap="round" fill="none"><line x1="346.6" y1="680.7" x2="372" y2="680.7" stroke="#222" stroke-width="3.6"/><path d="M346.6 670.2 Q349.5 671.9 346.6 673.7 Q343.7 675.4 346.6 677.2 Q349.5 678.9 346.6 680.7 Q343.7 682.4 346.6 684.2 Q349.5 685.9 346.6 687.7 Q343.7 689.4 346.6 691.2" stroke="#222" stroke-width="4.5"/><text x="375.9" y="686.7" font-size="14.4" fill="#222" stroke="#222" text-anchor="start" stroke-width="0.12">OH</text></g><g transform="translate(146.5,662.9) scale(0.31) translate(-467.2,-681.2)" stroke-linecap="round" fill="none"><line x1="451.9" y1="678.8" x2="460.3" y2="683.9" stroke="#222" stroke-width="2.9"/><line x1="473" y1="684" x2="488.7" y2="674.5" stroke="#222" stroke-width="2.9"/><path d="M491.3 678.8 Q489.2 678.6 490 676.7 Q490.8 674.7 488.7 674.5 Q486.6 674.3 487.5 672.4 Q488.3 670.4 486.2 670.2" stroke="#222" stroke-width="3.63"/><text x="449.5" y="678.8" font-size="11" fill="#222" stroke="#222" text-anchor="end" stroke-width="0.12">H<tspan font-size="6.8" dy="2.4">3</tspan><tspan dy="-2.4">C</tspan></text><text x="466.7" y="691.8" font-size="11" fill="#222" stroke="#222" text-anchor="middle" stroke-width="0.12">O</text></g><g transform="translate(179.8,660.7) scale(0.41) translate(-548.1,-680.7)" stroke-linecap="round" fill="none"><line x1="561" y1="649.9" x2="559.9" y2="661.3" stroke="#222" stroke-width="2.2"/><path d="M566.5 650.5 Q564.9 652.2 563.7 650.2 Q562.5 648.2 561 649.9 Q559.4 651.7 558.2 649.7 Q557.1 647.7 555.5 649.4" stroke="#222" stroke-width="2.74"/><line x1="554.6" y1="670" x2="544.7" y2="676.5" stroke="#222" stroke-width="2.2"/><line x1="544.7" y1="676.5" x2="544.7" y2="695.1" stroke="#222" stroke-width="2.2"/><line x1="544.7" y1="695.1" x2="535.2" y2="711.4" stroke="#222" stroke-width="2.2"/><line x1="535.2" y1="711.4" x2="553.8" y2="711.4" stroke="#222" stroke-width="2.2"/><line x1="553.8" y1="711.4" x2="544.7" y2="695.1" stroke="#222" stroke-width="2.2"/><text x="559.3" y="669.9" font-size="8.3" fill="#222" stroke="#222" text-anchor="middle" stroke-width="0.12">O</text></g><g transform="translate(114.3,700.3) scale(0.44) translate(-642.9,-682.5)" stroke-linecap="round" fill="none"><line x1="649.3" y1="658" x2="653.3" y2="666.6" stroke="#11a011" stroke-width="2.05"/><line x1="653.3" y1="666.6" x2="644.6" y2="681.5" stroke="#11a011" stroke-width="2.05"/><line x1="644.6" y1="681.5" x2="633" y2="681.2" stroke="#11a011" stroke-width="2.05"/><line x1="644.6" y1="681.5" x2="649.7" y2="691.4" stroke="#11a011" stroke-width="2.05"/><line x1="649.9" y1="700.8" x2="644.6" y2="711.7" stroke="#11a011" stroke-width="2.05"/><path d="M640.1 709.6 Q642 708.6 642.4 710.6 Q642.8 712.7 644.6 711.7 Q646.5 710.7 646.9 712.8 Q647.3 714.9 649.2 713.9" stroke="#11a011" stroke-width="2.56"/><text x="643.7" y="653.9" font-size="7.7" fill="#11a011" stroke="#11a011" text-anchor="middle" stroke-width="0.12">R10</text><text x="632.9" y="683.9" font-size="7.7" fill="#11a011" stroke="#11a011" text-anchor="end" stroke-width="0.12">R11</text><text x="652.1" y="698.9" font-size="7.7" fill="#11a011" stroke="#11a011" text-anchor="middle" stroke-width="0.12">O</text></g><g transform="translate(145.5,698.4) scale(0.38) translate(-726,-678.8)" stroke-linecap="round" fill="none"><line x1="709.7" y1="649.6" x2="721.1" y2="656.1" stroke="#222" stroke-width="2.37"/><path d="M712.2 645.3 Q713.1 647.2 711 647.4 Q708.9 647.7 709.7 649.6 Q710.6 651.5 708.5 651.8 Q706.4 652 707.3 654" stroke="#222" stroke-width="2.96"/><line x1="726.3" y1="665.2" x2="726.3" y2="678.5" stroke="#222" stroke-width="2.37"/><line x1="726.3" y1="678.5" x2="742.3" y2="689.5" stroke="#222" stroke-width="2.37"/><line x1="742.3" y1="689.5" x2="736.3" y2="708.1" stroke="#222" stroke-width="2.37"/><line x1="736.3" y1="708.1" x2="722.5" y2="708.1" stroke="#222" stroke-width="2.37"/><line x1="714.6" y1="702.2" x2="710.7" y2="689.5" stroke="#222" stroke-width="2.37"/><line x1="710.7" y1="689.5" x2="726.3" y2="678.5" stroke="#222" stroke-width="2.37"/><text x="726.3" y="662.3" font-size="8.9" fill="#222" stroke="#222" text-anchor="middle" stroke-width="0.12">O</text><text x="716.4" y="711.3" font-size="8.9" fill="#222" stroke="#222" text-anchor="middle" stroke-width="0.12">O</text></g></svg></div>
<div class="box" style="left:94px;top:727px;width:101px;height:97px"><div class="hd" style="background:#d0ffe0"><span class="t">R4 <span class="n" style="position:static">[2]</span></span></div><svg style="left:-95px;top:-728px" width="10" height="10"><g stroke-linecap="round" fill="none"><line x1="104.8" y1="784.4" x2="116.7" y2="784.6" stroke="#11a011" stroke-width="1.2"/><path d="M104.9 778.9 Q106.7 780.3 104.8 781.7 Q103 783 104.8 784.4 Q106.6 785.8 104.8 787.1 Q102.9 788.5 104.7 789.9" stroke="#11a011" stroke-width="1.5"/><text x="119.9" y="787.6" font-size="8" fill="#11a011" stroke="#11a011" text-anchor="start" stroke-width="0.3">CH<tspan font-size="5" dy="1.8">3</tspan></text></g><g stroke-linecap="round" fill="none"><line x1="162.2" y1="784.4" x2="173.6" y2="784.6" stroke="#222" stroke-width="1.2"/><path d="M162.3 778.9 Q164.1 780.3 162.2 781.7 Q160.4 783 162.2 784.4 Q164 785.8 162.2 787.1 Q160.3 788.5 162.1 789.9" stroke="#222" stroke-width="1.5"/><text x="176.9" y="787.8" font-size="8.5" fill="#222" stroke="#222" text-anchor="start" stroke-width="0.3">Cl</text></g></svg></div><div style="left:948px;top:40px;width:1px;height:878px;background:#c2c2c2"></div>
<div style="left:319px;top:88px;width:629px;height:274px;background:#fff"></div>
<div style="left:314px;top:87px;width:5px;height:825px;background:#f2f2f2"></div>
<svg style="left:0;top:0" width="1626" height="400"><g stroke-linecap="round" fill="none"><line x1="560.2" y1="196.5" x2="528.2" y2="215" stroke="#11a011" stroke-width="4"/><line x1="513.5" y1="240.5" x2="513.5" y2="277.5" stroke="#11a011" stroke-width="4"/><line x1="522" y1="240.5" x2="522" y2="273.8" stroke="#11a011" stroke-width="4"/><line x1="513.5" y1="277.5" x2="546.4" y2="296.5" stroke="#11a011" stroke-width="4"/><line x1="574.1" y1="296.5" x2="607" y2="277.5" stroke="#11a011" stroke-width="4"/><line x1="569.8" y1="289.1" x2="598.1" y2="272.8" stroke="#11a011" stroke-width="4"/><line x1="607" y1="277.5" x2="607" y2="223.5" stroke="#11a011" stroke-width="4"/><line x1="607" y1="223.5" x2="560.2" y2="196.5" stroke="#11a011" stroke-width="4"/><line x1="596.2" y1="227.1" x2="562.5" y2="207.6" stroke="#11a011" stroke-width="4"/><line x1="607" y1="223.5" x2="653.8" y2="196.5" stroke="#11a011" stroke-width="4"/><line x1="653.8" y1="196.5" x2="700.5" y2="223.5" stroke="#11a011" stroke-width="4"/><line x1="656.1" y1="207.6" x2="689.7" y2="227.1" stroke="#11a011" stroke-width="4"/><line x1="700.5" y1="223.5" x2="700.5" y2="277.5" stroke="#11a011" stroke-width="4"/><line x1="700.5" y1="277.5" x2="653.8" y2="304.5" stroke="#11a011" stroke-width="4"/><line x1="689.7" y1="273.9" x2="656.1" y2="293.4" stroke="#11a011" stroke-width="4"/><line x1="653.8" y1="304.5" x2="607" y2="277.5" stroke="#11a011" stroke-width="4"/><line x1="560.2" y1="196.5" x2="560.6" y2="161.5" stroke="#11a011" stroke-width="4"/><line x1="653.8" y1="196.5" x2="653.8" y2="161.5" stroke="#11a011" stroke-width="4"/><line x1="700.5" y1="223.5" x2="727.8" y2="208.2" stroke="#11a011" stroke-width="4"/><line x1="700.5" y1="277.5" x2="728.2" y2="294.2" stroke="#11a011" stroke-width="4"/><text x="513.5" y="231.8" font-size="23" fill="#11a011" stroke="none" text-anchor="middle">N</text><text x="560.2" y="312.8" font-size="23" fill="#11a011" stroke="none" text-anchor="middle">N</text><text x="556.8" y="152.8" font-size="23" fill="#11a011" stroke="none" text-anchor="middle">HN</text><text x="608.2" y="127.8" font-size="23" fill="#11a011" stroke="none" text-anchor="middle">R1</text><text x="653.8" y="152.8" font-size="23" fill="#11a011" stroke="none" text-anchor="middle">R4</text><text x="747" y="205.8" font-size="23" fill="#11a011" stroke="none" text-anchor="middle">R3</text><text x="747" y="313.8" font-size="23" fill="#11a011" stroke="none" text-anchor="middle">R2</text></g><line x1="579.5" y1="133" x2="591" y2="127.500" stroke="#11a011" stroke-width="4" stroke-linecap="round"/></svg>
<span class="t" style="left:327px;top:340px;font-size:15.5px;letter-spacing:0.02px;color:#111" id="libsize">Markush library size: 11,232</span>
<div style="left:319px;top:362px;width:629px;height:5px;background:#f2f2f2"></div>
<div style="left:319px;top:367px;width:616px;height:532px;background:#fff;overflow:hidden" id="rpane">
<div class="grp" style="left:9px;top:15px;width:620px;height:101px"><span class="t">R1</span></div>
<div class="cell" style="left:14px;top:30px;background:#d0ffe0"></div><div class="cs" style="left:96px;top:29px"></div><div class="cs" style="left:185px;top:29px"></div><div class="cs" style="left:274px;top:29px"></div><svg style="left:-319px;top:-367px" width="1626" height="920"><g stroke-linecap="round" fill="none"><line x1="386.5" y1="419.1" x2="400.2" y2="426.9" stroke="#222" stroke-width="1.1"/><line x1="386.9" y1="422.1" x2="397.4" y2="428" stroke="#222" stroke-width="1.1"/><line x1="400.2" y1="426.9" x2="400.2" y2="442.3" stroke="#222" stroke-width="1.1"/><line x1="400.2" y1="442.3" x2="386.5" y2="450.1" stroke="#222" stroke-width="1.1"/><line x1="397.4" y1="441.2" x2="386.9" y2="447.1" stroke="#222" stroke-width="1.1"/><line x1="386.5" y1="450.1" x2="372.8" y2="442.3" stroke="#222" stroke-width="1.1"/><line x1="372.8" y1="442.3" x2="372.8" y2="426.9" stroke="#222" stroke-width="1.1"/><line x1="375.2" y1="440.5" x2="375.2" y2="428.7" stroke="#222" stroke-width="1.1"/><line x1="372.8" y1="426.9" x2="386.5" y2="419.1" stroke="#222" stroke-width="1.1"/><line x1="386.5" y1="419.1" x2="386.5" y2="403.6" stroke="#222" stroke-width="1.1"/><path d="M392 403.6 Q390.6 405.5 389.2 403.6 Q387.8 401.7 386.5 403.6 Q385.1 405.5 383.7 403.6 Q382.3 401.7 381 403.6" stroke="#222" stroke-width="1.38"/><line x1="372.8" y1="426.9" x2="363.6" y2="421.8" stroke="#222" stroke-width="1.1"/><line x1="354.7" y1="421.5" x2="351.8" y2="422.8" stroke="#222" stroke-width="1.1"/><line x1="386.5" y1="450.1" x2="386.5" y2="460.6" stroke="#222" stroke-width="1.1"/><text x="359.2" y="422" font-size="7.2" fill="#222" stroke="none" text-anchor="middle">O</text><text x="345.4" y="427.7" font-size="5.5" fill="#222" stroke="none" text-anchor="middle">R5</text><text x="386.5" y="467" font-size="5.5" fill="#222" stroke="none" text-anchor="middle">R6</text></g><g stroke-linecap="round" fill="none"><line x1="451.7" y1="425.7" x2="460.8" y2="430.7" stroke="#222" stroke-width="1"/><line x1="460.8" y1="430.7" x2="460.8" y2="441.1" stroke="#222" stroke-width="1"/><line x1="459" y1="431.9" x2="459" y2="439.9" stroke="#222" stroke-width="1"/><line x1="460.8" y1="441.1" x2="451.7" y2="446.5" stroke="#222" stroke-width="1"/><line x1="451.7" y1="446.5" x2="442.6" y2="441.1" stroke="#222" stroke-width="1"/><line x1="451.5" y1="444.3" x2="444.6" y2="440.2" stroke="#222" stroke-width="1"/><line x1="442.6" y1="441.1" x2="442.6" y2="430.7" stroke="#222" stroke-width="1"/><line x1="442.6" y1="430.7" x2="451.7" y2="425.7" stroke="#222" stroke-width="1"/><line x1="444.5" y1="431.7" x2="451.5" y2="427.9" stroke="#222" stroke-width="1"/><line x1="442.6" y1="430.7" x2="435.4" y2="428.4" stroke="#222" stroke-width="1"/><line x1="430.4" y1="430.3" x2="428.5" y2="433.6" stroke="#222" stroke-width="1"/><line x1="428.9" y1="439.2" x2="432.9" y2="444.5" stroke="#222" stroke-width="1"/><line x1="430.3" y1="438.1" x2="433.9" y2="442.7" stroke="#222" stroke-width="1"/><line x1="432.9" y1="444.5" x2="442.6" y2="441.1" stroke="#222" stroke-width="1"/><line x1="460.8" y1="430.7" x2="466.2" y2="427.5" stroke="#222" stroke-width="1"/><line x1="472.2" y1="427.3" x2="478.6" y2="430.7" stroke="#222" stroke-width="1"/><line x1="478.6" y1="430.7" x2="487.1" y2="427" stroke="#222" stroke-width="1"/><line x1="478.6" y1="430.7" x2="480.3" y2="438.2" stroke="#222" stroke-width="1"/><line x1="460.8" y1="441.1" x2="469.1" y2="446.5" stroke="#222" stroke-width="1"/><path d="M467.3 449.4 Q466.7 448 468.2 447.9 Q469.7 447.8 469.1 446.5 Q468.6 445.1 470.1 445 Q471.6 444.9 471 443.5" stroke="#222" stroke-width="1.25"/><text x="432.1" y="428.8" font-size="4.1" fill="#222" stroke="none" text-anchor="middle">HN</text><text x="426.8" y="438" font-size="4.1" fill="#222" stroke="none" text-anchor="middle">N</text><text x="469.1" y="427.2" font-size="4.1" fill="#222" stroke="none" text-anchor="middle">O</text><text x="490.2" y="427.2" font-size="4.1" fill="#222" stroke="none" text-anchor="middle">CH<tspan font-size="2.5" dy="0.9">3</tspan></text><text x="481.1" y="443" font-size="4.1" fill="#222" stroke="none" text-anchor="middle">CH<tspan font-size="2.5" dy="0.9">3</tspan></text></g><g stroke-linecap="round" fill="none"><line x1="562.5" y1="417.4" x2="574.6" y2="414.6" stroke="#222" stroke-width="1.1"/><line x1="574.6" y1="414.6" x2="582.1" y2="423.2" stroke="#222" stroke-width="1.1"/><line x1="574" y1="416.9" x2="579.7" y2="423.5" stroke="#222" stroke-width="1.1"/><line x1="582.1" y1="423.2" x2="577.9" y2="434" stroke="#222" stroke-width="1.1"/><line x1="577.9" y1="434" x2="570.3" y2="436" stroke="#222" stroke-width="1.1"/><line x1="576.5" y1="432.3" x2="569.8" y2="434.1" stroke="#222" stroke-width="1.1"/><line x1="564.2" y1="434.1" x2="559.3" y2="428.2" stroke="#222" stroke-width="1.1"/><line x1="559.3" y1="428.2" x2="562.5" y2="417.4" stroke="#222" stroke-width="1.1"/><line x1="561.6" y1="427.5" x2="564" y2="419.3" stroke="#222" stroke-width="1.1"/><line x1="562.5" y1="417.4" x2="555.5" y2="408.3" stroke="#222" stroke-width="1.1"/><path d="M558.3 406.1 Q558.3 407.6 556.9 407.2 Q555.5 406.8 555.5 408.3 Q555.5 409.7 554.1 409.3 Q552.7 408.9 552.7 410.4" stroke="#222" stroke-width="1.38"/><line x1="559.3" y1="428.2" x2="551.7" y2="430.1" stroke="#222" stroke-width="1.1"/><line x1="547" y1="434.7" x2="544.7" y2="442.3" stroke="#222" stroke-width="1.1"/><line x1="544.7" y1="442.3" x2="551.3" y2="451.4" stroke="#222" stroke-width="1.1"/><line x1="551.3" y1="451.4" x2="546.9" y2="457.9" stroke="#222" stroke-width="1.1"/><line x1="541.1" y1="459.9" x2="533.1" y2="457.3" stroke="#222" stroke-width="1.1"/><line x1="533.1" y1="457.3" x2="533.1" y2="444.8" stroke="#222" stroke-width="1.1"/><line x1="533.1" y1="444.8" x2="544.7" y2="442.3" stroke="#222" stroke-width="1.1"/><line x1="533.1" y1="444.8" x2="525.5" y2="442.9" stroke="#222" stroke-width="1.1"/><line x1="519.5" y1="445" x2="514.8" y2="451.4" stroke="#222" stroke-width="1.1"/><line x1="514.8" y1="451.4" x2="522.6" y2="461.1" stroke="#222" stroke-width="1.1"/><line x1="522.6" y1="461.1" x2="533.1" y2="457.3" stroke="#222" stroke-width="1.1"/><text x="566.6" y="439" font-size="5.6" fill="#222" stroke="none" text-anchor="middle">N</text><text x="548" y="433" font-size="5.6" fill="#222" stroke="none" text-anchor="middle">O</text><text x="544.7" y="463.1" font-size="5.6" fill="#222" stroke="none" text-anchor="middle">O</text><text x="521.8" y="444" font-size="5.6" fill="#222" stroke="none" text-anchor="middle">O</text></g></svg>
<div class="grp" style="left:9px;top:137px;width:620px;height:102px;border-top:2px solid #d9d9d9;border-bottom:2px solid #d9d9d9"><span class="t" style="top:-9px">R2</span></div>
<div class="cell" style="left:14px;top:152px;background:#d0ffe0;height:83px"></div><div class="cs" style="left:96px;top:151px;height:80px"></div><div class="cs" style="left:185px;top:151px;height:80px"></div><div class="cs" style="left:274px;top:151px;height:80px"></div><div class="cs" style="left:362px;top:151px;height:80px"></div><div class="cs" style="left:451px;top:151px;height:80px"></div><div class="cs" style="left:540px;top:151px;height:80px"></div><svg style="left:-319px;top:-367px" width="1626" height="920"><g stroke-linecap="round" fill="none"><line x1="372.8" y1="551.8" x2="372.8" y2="543.6" stroke="#000" stroke-width="1.1"/><line x1="370.2" y1="551.8" x2="370.2" y2="543.6" stroke="#000" stroke-width="1.1"/><line x1="377.4" y1="559" x2="385.6" y2="559" stroke="#000" stroke-width="1.1"/><line x1="377.4" y1="556.4" x2="385.6" y2="556.4" stroke="#000" stroke-width="1.1"/><line x1="357.1" y1="557.7" x2="365.7" y2="557.7" stroke="#000" stroke-width="1.1"/><line x1="371.5" y1="563.5" x2="371.5" y2="571.7" stroke="#000" stroke-width="1.1"/><line x1="394.2" y1="562.8" x2="401.1" y2="575.9" stroke="#000" stroke-width="1.1"/><path d="M396.6 578.3 Q397 576.2 398.9 577.1 Q400.8 578 401.1 575.9 Q401.4 573.8 403.3 574.8 Q405.2 575.7 405.5 573.6" stroke="#000" stroke-width="1.38"/><text x="371.5" y="560.8" font-size="8.6" fill="#000" stroke="none" text-anchor="middle">S</text><text x="371.5" y="540.8" font-size="8.6" fill="#000" stroke="none" text-anchor="middle">O</text><text x="391.4" y="560.8" font-size="8.6" fill="#000" stroke="none" text-anchor="middle">N</text><text x="354.3" y="560.8" font-size="8.6" fill="#000" stroke="none" text-anchor="end">H<tspan font-size="5.3" dy="1.9">3</tspan><tspan dy="-1.9">C</tspan></text><text x="371.5" y="580.7" font-size="8.6" fill="#000" stroke="none" text-anchor="middle">R7</text></g><g stroke-linecap="round" fill="none"><line x1="464" y1="562.3" x2="475.5" y2="570.1" stroke="#000" stroke-width="1.1"/><line x1="475.5" y1="570.1" x2="469.5" y2="588.9" stroke="#000" stroke-width="1.1"/><line x1="469.5" y1="588.9" x2="450.4" y2="588.9" stroke="#000" stroke-width="1.1"/><line x1="450.4" y1="588.9" x2="444.2" y2="570.1" stroke="#000" stroke-width="1.1"/><line x1="444.2" y1="570.1" x2="454.5" y2="562.5" stroke="#000" stroke-width="1.1"/><line x1="456.1" y1="553.9" x2="451.1" y2="548.7" stroke="#000" stroke-width="1.1"/><line x1="454.3" y1="555.6" x2="449.4" y2="550.3" stroke="#000" stroke-width="1.1"/><line x1="464.1" y1="555.7" x2="469.5" y2="550.2" stroke="#000" stroke-width="1.1"/><line x1="462.4" y1="554" x2="467.8" y2="548.5" stroke="#000" stroke-width="1.1"/><line x1="471" y1="539.6" x2="467.2" y2="527.3" stroke="#000" stroke-width="1.1"/><path d="M471.9 525.8 Q471.2 527.8 469.5 526.5 Q467.8 525.3 467.2 527.3 Q466.5 529.3 464.8 528 Q463.1 526.8 462.4 528.8" stroke="#000" stroke-width="1.38"/><text x="459.2" y="562.1" font-size="8.6" fill="#000" stroke="none" text-anchor="middle">S</text><text x="446.2" y="548.3" font-size="8.6" fill="#000" stroke="none" text-anchor="middle">O</text><text x="472.8" y="548.3" font-size="8.6" fill="#000" stroke="none" text-anchor="middle">N</text></g><g stroke-linecap="round" fill="none"><line x1="551.8" y1="553.7" x2="559.7" y2="561.8" stroke="#000" stroke-width="1.1"/><line x1="559.7" y1="561.8" x2="548.9" y2="572.6" stroke="#000" stroke-width="1.1"/><line x1="548.9" y1="572.6" x2="538.1" y2="561.8" stroke="#000" stroke-width="1.1"/><line x1="538.1" y1="561.8" x2="545.9" y2="553.7" stroke="#000" stroke-width="1.1"/><line x1="546.5" y1="547" x2="542" y2="543" stroke="#000" stroke-width="1.1"/><line x1="544.9" y1="548.8" x2="540.4" y2="544.8" stroke="#000" stroke-width="1.1"/><line x1="552.8" y1="548.8" x2="557.3" y2="544.8" stroke="#000" stroke-width="1.1"/><line x1="551.2" y1="547" x2="555.7" y2="543" stroke="#000" stroke-width="1.1"/><line x1="558.6" y1="537" x2="555.8" y2="525.6" stroke="#000" stroke-width="1.1"/><path d="M559.7 524.7 Q559.1 526.2 557.8 525.1 Q556.5 524.1 555.8 525.6 Q555.2 527.2 553.9 526.1 Q552.6 525 551.9 526.6" stroke="#000" stroke-width="1.38"/><line x1="548.9" y1="572.6" x2="548.9" y2="584.3" stroke="#000" stroke-width="1.1"/><text x="548.9" y="552.9" font-size="6.2" fill="#000" stroke="none" text-anchor="middle">S</text><text x="538.1" y="543.3" font-size="6.2" fill="#000" stroke="none" text-anchor="middle">O</text><text x="559.7" y="543.3" font-size="6.2" fill="#000" stroke="none" text-anchor="middle">N</text><text x="548.9" y="589.8" font-size="5.3" fill="#000" stroke="none" text-anchor="middle">R8</text></g><g stroke-linecap="round" fill="none"><line x1="641.5" y1="553.1" x2="650.8" y2="558.8" stroke="#000" stroke-width="1.1"/><line x1="650.8" y1="558.8" x2="650.8" y2="574.3" stroke="#000" stroke-width="1.1"/><line x1="650.8" y1="574.3" x2="641.5" y2="579.5" stroke="#000" stroke-width="1.1"/><line x1="633.5" y1="579.5" x2="624.2" y2="574.3" stroke="#000" stroke-width="1.1"/><line x1="624.2" y1="574.3" x2="624.2" y2="558.8" stroke="#000" stroke-width="1.1"/><line x1="624.2" y1="558.8" x2="633.6" y2="553.1" stroke="#000" stroke-width="1.1"/><line x1="635.2" y1="546.5" x2="631.3" y2="542.4" stroke="#000" stroke-width="1.1"/><line x1="633.4" y1="548.2" x2="629.5" y2="544.1" stroke="#000" stroke-width="1.1"/><line x1="641.5" y1="548" x2="645" y2="544.1" stroke="#000" stroke-width="1.1"/><line x1="639.7" y1="546.4" x2="643.2" y2="542.5" stroke="#000" stroke-width="1.1"/><line x1="645.6" y1="535.5" x2="642.2" y2="526.1" stroke="#000" stroke-width="1.1"/><path d="M646.4 524.6 Q645.9 526.4 644.3 525.4 Q642.7 524.3 642.2 526.1 Q641.6 527.9 640 526.9 Q638.5 525.8 637.9 527.6" stroke="#000" stroke-width="1.38"/><text x="637.5" y="591.3" font-size="6.8" fill="#000" stroke="none" text-anchor="middle">H</text><text x="637.5" y="553.1" font-size="6.8" fill="#000" stroke="none" text-anchor="middle">S</text><text x="627.2" y="542.3" font-size="6.8" fill="#000" stroke="none" text-anchor="middle">O</text><text x="647.1" y="542.3" font-size="6.8" fill="#000" stroke="none" text-anchor="middle">N</text><text x="637.5" y="584.2" font-size="6.8" fill="#000" stroke="none" text-anchor="middle">N</text></g><g stroke-linecap="round" fill="none"><line x1="729.7" y1="555.8" x2="740.5" y2="561.8" stroke="#000" stroke-width="1.1"/><line x1="740.5" y1="561.8" x2="740.5" y2="579.3" stroke="#000" stroke-width="1.1"/><line x1="740.5" y1="579.3" x2="730.1" y2="584.9" stroke="#000" stroke-width="1.1"/><line x1="721.9" y1="584.9" x2="711.4" y2="579.3" stroke="#000" stroke-width="1.1"/><line x1="711.4" y1="579.3" x2="711.4" y2="561.8" stroke="#000" stroke-width="1.1"/><line x1="711.4" y1="561.8" x2="721.7" y2="555.8" stroke="#000" stroke-width="1.1"/><line x1="723.5" y1="549.3" x2="719.2" y2="544.5" stroke="#000" stroke-width="1.1"/><line x1="721.7" y1="550.9" x2="717.4" y2="546.1" stroke="#000" stroke-width="1.1"/><line x1="729.7" y1="551" x2="734.5" y2="546.1" stroke="#000" stroke-width="1.1"/><line x1="728" y1="549.3" x2="732.7" y2="544.4" stroke="#000" stroke-width="1.1"/><line x1="735.4" y1="537.5" x2="731.8" y2="526.1" stroke="#000" stroke-width="1.1"/><path d="M736.1 524.8 Q735.5 526.6 734 525.4 Q732.4 524.3 731.8 526.1 Q731.2 527.9 729.7 526.8 Q728.1 525.7 727.5 527.5" stroke="#000" stroke-width="1.38"/><text x="725.7" y="556" font-size="6.8" fill="#000" stroke="none" text-anchor="middle">S</text><text x="715.2" y="544.3" font-size="6.8" fill="#000" stroke="none" text-anchor="middle">O</text><text x="736.8" y="544.3" font-size="6.8" fill="#000" stroke="none" text-anchor="middle">N</text><text x="726" y="589.5" font-size="6.8" fill="#000" stroke="none" text-anchor="middle">O</text></g><g stroke-linecap="round" fill="none"><line x1="818.1" y1="549.6" x2="826.8" y2="554.7" stroke="#000" stroke-width="1.1"/><line x1="826.8" y1="554.7" x2="826.8" y2="568.8" stroke="#000" stroke-width="1.1"/><line x1="826.8" y1="568.8" x2="814.9" y2="575.9" stroke="#000" stroke-width="1.1"/><line x1="814.9" y1="575.9" x2="802.7" y2="568.8" stroke="#000" stroke-width="1.1"/><line x1="802.7" y1="568.8" x2="802.7" y2="554.7" stroke="#000" stroke-width="1.1"/><line x1="802.7" y1="554.7" x2="811.6" y2="549.6" stroke="#000" stroke-width="1.1"/><line x1="813.1" y1="544.1" x2="809.2" y2="540" stroke="#000" stroke-width="1.1"/><line x1="811.4" y1="545.8" x2="807.5" y2="541.7" stroke="#000" stroke-width="1.1"/><line x1="818.3" y1="545.8" x2="822.2" y2="541.7" stroke="#000" stroke-width="1.1"/><line x1="816.6" y1="544.1" x2="820.5" y2="540" stroke="#000" stroke-width="1.1"/><line x1="822.7" y1="534.5" x2="819.3" y2="525.3" stroke="#000" stroke-width="1.1"/><path d="M823.1 523.9 Q822.6 525.5 821.2 524.6 Q819.8 523.7 819.3 525.3 Q818.9 526.9 817.5 526 Q816.1 525 815.6 526.7" stroke="#000" stroke-width="1.38"/><line x1="814.9" y1="575.9" x2="814.9" y2="585.8" stroke="#000" stroke-width="1.1"/><text x="814.9" y="549.7" font-size="5.6" fill="#000" stroke="none" text-anchor="middle">S</text><text x="805.7" y="540.1" font-size="5.6" fill="#000" stroke="none" text-anchor="middle">O</text><text x="824" y="540.1" font-size="5.6" fill="#000" stroke="none" text-anchor="middle">N</text><text x="814.9" y="591" font-size="5" fill="#000" stroke="none" text-anchor="middle">R9</text></g></svg>
<div class="grp" style="left:9px;top:260px;width:620px;height:101px"><span class="t">R3</span></div>
<div class="cs" style="left:96px;top:274px"></div><div class="cs" style="left:185px;top:274px"></div><div class="cs" style="left:274px;top:274px"></div><div class="cell" style="left:280px;top:275px;background:#d0ffe0"></div><div class="cs" style="left:362px;top:274px"></div><div class="cs" style="left:451px;top:274px"></div><svg style="left:-319px;top:-367px" width="1626" height="920"><g stroke-linecap="round" fill="none"><line x1="346.6" y1="680.7" x2="372" y2="680.7" stroke="#000" stroke-width="1.5"/><path d="M346.6 670.2 Q349.5 671.9 346.6 673.7 Q343.7 675.4 346.6 677.2 Q349.5 678.9 346.6 680.7 Q343.7 682.4 346.6 684.2 Q349.5 685.9 346.6 687.7 Q343.7 689.4 346.6 691.2" stroke="#000" stroke-width="1.88"/><text x="375.4" y="687.2" font-size="15.5" fill="#000" stroke="none" text-anchor="start">OH</text></g><g stroke-linecap="round" fill="none"><line x1="450.8" y1="678.1" x2="461.4" y2="684.6" stroke="#000" stroke-width="1.2"/><line x1="471.9" y1="684.7" x2="488.7" y2="674.5" stroke="#000" stroke-width="1.2"/><path d="M491.3 678.8 Q489.2 678.6 490 676.7 Q490.8 674.7 488.7 674.5 Q486.6 674.3 487.5 672.4 Q488.3 670.4 486.2 670.2" stroke="#000" stroke-width="1.5"/><text x="448.8" y="678.1" font-size="9" fill="#000" stroke="none" text-anchor="end">H<tspan font-size="5.6" dy="2">3</tspan><tspan dy="-2">C</tspan></text><text x="466.7" y="691" font-size="9" fill="#000" stroke="none" text-anchor="middle">O</text></g><g stroke-linecap="round" fill="none"><line x1="561" y1="649.9" x2="559.8" y2="661.7" stroke="#000" stroke-width="1.1"/><path d="M566.5 650.5 Q564.9 652.2 563.7 650.2 Q562.5 648.2 561 649.9 Q559.4 651.7 558.2 649.7 Q557.1 647.7 555.5 649.4" stroke="#000" stroke-width="1.38"/><line x1="555" y1="669.7" x2="544.7" y2="676.5" stroke="#000" stroke-width="1.1"/><line x1="544.7" y1="676.5" x2="544.7" y2="695.1" stroke="#000" stroke-width="1.1"/><line x1="544.7" y1="695.1" x2="535.2" y2="711.4" stroke="#000" stroke-width="1.1"/><line x1="535.2" y1="711.4" x2="553.8" y2="711.4" stroke="#000" stroke-width="1.1"/><line x1="553.8" y1="711.4" x2="544.7" y2="695.1" stroke="#000" stroke-width="1.1"/><text x="559.3" y="669.6" font-size="7.6" fill="#000" stroke="none" text-anchor="middle">O</text></g><g stroke-linecap="round" fill="none"><line x1="649.3" y1="658" x2="653.3" y2="666.6" stroke="#000" stroke-width="1.1"/><line x1="653.3" y1="666.6" x2="644.6" y2="681.5" stroke="#000" stroke-width="1.1"/><line x1="644.6" y1="681.5" x2="633" y2="681.2" stroke="#000" stroke-width="1.1"/><line x1="644.6" y1="681.5" x2="649.8" y2="691.5" stroke="#000" stroke-width="1.1"/><line x1="649.9" y1="700.8" x2="644.6" y2="711.7" stroke="#000" stroke-width="1.1"/><path d="M640.1 709.6 Q642 708.6 642.4 710.6 Q642.8 712.7 644.6 711.7 Q646.5 710.7 646.9 712.8 Q647.3 714.9 649.2 713.9" stroke="#000" stroke-width="1.38"/><text x="643.7" y="653.9" font-size="7.6" fill="#000" stroke="none" text-anchor="middle">R10</text><text x="632.9" y="683.9" font-size="7.6" fill="#000" stroke="none" text-anchor="end">R11</text><text x="652.1" y="698.8" font-size="7.6" fill="#000" stroke="none" text-anchor="middle">O</text></g><g stroke-linecap="round" fill="none"><line x1="709.7" y1="649.6" x2="721.9" y2="656.5" stroke="#000" stroke-width="1.1"/><path d="M712.2 645.3 Q713.1 647.2 711 647.4 Q708.9 647.7 709.7 649.6 Q710.6 651.5 708.5 651.8 Q706.4 652 707.3 654" stroke="#000" stroke-width="1.38"/><line x1="726.3" y1="664.2" x2="726.3" y2="678.5" stroke="#000" stroke-width="1.1"/><line x1="726.3" y1="678.5" x2="742.3" y2="689.5" stroke="#000" stroke-width="1.1"/><line x1="742.3" y1="689.5" x2="736.3" y2="708.1" stroke="#000" stroke-width="1.1"/><line x1="736.3" y1="708.1" x2="721.6" y2="708.1" stroke="#000" stroke-width="1.1"/><line x1="714.9" y1="703.1" x2="710.7" y2="689.5" stroke="#000" stroke-width="1.1"/><line x1="710.7" y1="689.5" x2="726.3" y2="678.5" stroke="#000" stroke-width="1.1"/><text x="726.3" y="661.8" font-size="7.6" fill="#000" stroke="none" text-anchor="middle">O</text><text x="716.4" y="710.8" font-size="7.6" fill="#000" stroke="none" text-anchor="middle">O</text></g></svg>
<div class="grp" style="left:9px;top:382px;width:620px;height:102px;border-top:2px solid #d9d9d9;border-bottom:2px solid #d9d9d9"><span class="t" style="top:-9px">R4</span></div>
<div class="cell" style="left:14px;top:397px;background:#d0ffe0;height:83px"></div><div class="cs" style="left:96px;top:396px;height:80px"></div><div class="cs" style="left:185px;top:396px;height:80px"></div><svg style="left:-319px;top:-367px" width="1626" height="920"><g stroke-linecap="round" fill="none"><line x1="345.1" y1="800.7" x2="370.1" y2="800.7" stroke="#000" stroke-width="1.2"/><path d="M345.1 790.7 Q347.9 792.3 345.1 794 Q342.3 795.7 345.1 797.3 Q347.9 799 345.1 800.7 Q342.3 802.3 345.1 804 Q347.9 805.7 345.1 807.3 Q342.3 809 345.1 810.7" stroke="#000" stroke-width="1.5"/><text x="372.9" y="806.3" font-size="13.5" fill="#000" stroke="none" text-anchor="start">CH<tspan font-size="8.4" dy="3">3</tspan></text></g><g stroke-linecap="round" fill="none"><line x1="436.3" y1="802.7" x2="465.5" y2="802.7" stroke="#000" stroke-width="1.6"/><path d="M436.3 790.7 Q439.6 792.7 436.3 794.7 Q432.9 796.7 436.3 798.7 Q439.6 800.7 436.3 802.7 Q432.9 804.7 436.3 806.7 Q439.6 808.7 436.3 810.7 Q432.9 812.7 436.3 814.7" stroke="#000" stroke-width="2"/><text x="467.8" y="809.8" font-size="17" fill="#000" stroke="#000" text-anchor="start" stroke-width="0.5">Cl</text></g></svg>
<div class="grp" style="left:9px;top:505px;width:620px;height:101px"><span class="t">R5</span></div>
<div class="cs" style="left:96px;top:519px"></div><div class="cs" style="left:185px;top:519px"></div><div class="cs" style="left:274px;top:519px"></div><div class="cs" style="left:362px;top:519px"></div><div class="cs" style="left:451px;top:519px"></div><div class="cell" style="left:457px;top:520px;background:#ffe0e0"></div><div class="cs" style="left:540px;top:519px"></div><svg style="left:-319px;top:-367px" width="1626" height="920"><g stroke-linecap="round" fill="none"><line x1="370.8" y1="894.6" x2="370.8" y2="906" stroke="#000" stroke-width="1.1"/><path d="M376.3 894.6 Q374.9 896.5 373.6 894.6 Q372.2 892.7 370.8 894.6 Q369.4 896.5 368.1 894.6 Q366.7 892.7 365.3 894.6" stroke="#000" stroke-width="1.38"/><path d="M567.3 897.2 Q565.8 899.2 564.3 897.2 Q562.8 895.2 561.3 897.2 Q559.8 899.2 558.3 897.2 Q556.8 895.2 555.3 897.2" stroke="#000" stroke-width="1.38"/><line x1="637.2" y1="893.6" x2="638" y2="906" stroke="#000" stroke-width="1.1"/><path d="M642 893.3 Q640.9 895 639.6 893.4 Q638.3 891.9 637.2 893.6 Q636.1 895.3 634.8 893.8 Q633.5 892.2 632.4 893.9" stroke="#000" stroke-width="1.38"/><line x1="703.4" y1="893.8" x2="708" y2="905" stroke="#000" stroke-width="1.1"/><path d="M707.8 892 Q707.4 893.9 705.6 892.9 Q703.9 891.8 703.4 893.8 Q702.9 895.8 701.2 894.7 Q699.4 893.7 699 895.6" stroke="#000" stroke-width="1.38"/><text x="469" y="901.8" font-size="9" fill="#000" stroke="none" text-anchor="middle">CH</text></g><g stroke-linecap="round" fill="none"><line x1="815.5" y1="896.8" x2="819" y2="901" stroke="#11a011" stroke-width="1.1"/><text x="811.5" y="896" font-size="4.8" fill="#11a011" stroke="none" text-anchor="middle">H<tspan font-size="3" dy="1.1">3</tspan><tspan dy="-1.1">C</tspan></text></g></svg>
</div>
<div style="left:935px;top:367px;width:13px;height:532px;background:#f4f4f4"></div>
<div style="left:935px;top:367px;width:13px;height:192px;background:#dcdcdc"></div>
<div style="left:319px;top:899px;width:629px;height:13px;background:#f4f4f4"></div>
<div style="left:319px;top:899px;width:587px;height:13px;background:#dcdcdc"></div><span class="t" style="left:962px;top:13px;font-size:15.3px;letter-spacing:0.05px;color:#111">Validation View</span>
<svg style="left:1074px;top:15px" width="12" height="12"><path d="M1 1l9 9M10 1L1 10" stroke="#333" stroke-width="1.300"/></svg>
<div style="left:954px;top:34px;width:139px;height:4px;background:#9ba6ba"></div>
<div class="sep" style="left:1093px;top:9px;height:23px"></div>
<span class="t" style="left:1112px;top:13px;font-size:15.3px;letter-spacing:-0.2px;color:#111">Document Preview</span>
<div class="sep" style="left:1253px;top:9px;height:23px"></div>
<div style="left:1600px;top:25px;width:13px;height:1px;background:#555"></div>
<div style="left:954px;top:37px;width:668px;height:881px;border:1px solid #c2c2c2;border-top-color:#cfcfcf;background:#f2f2f2"></div>
<div class="sep" style="left:1047px;top:41px;height:39px"></div>
<div class="sep" style="left:1099px;top:41px;height:39px"></div>
<div class="sep" style="left:1152px;top:41px;height:39px"></div>
<svg style="left:968px;top:48px" width="30" height="24"><rect x="1.500" y="4.500" width="18.500" height="16.500" fill="#fff" stroke="#444" stroke-width="1.600"/><rect x="1" y="4" width="19.500" height="3" fill="#444"/><rect x="2" y="11.800" width="17.500" height="3.900" fill="#a8d8a8"/><path d="M1 11h19.500M1 16.300h19.500M7.500 6v15M13.800 6v15" stroke="#444" stroke-width="1.300" fill="none"/><path d="M17 5.500h8M21 1.500v8" stroke="#1f9a1f" stroke-width="2.500"/></svg>
<svg style="left:1008px;top:48px" width="30" height="24"><rect x="1.500" y="4.500" width="18.500" height="16.500" fill="#fff" stroke="#444" stroke-width="1.600"/><rect x="1" y="4" width="19.500" height="3" fill="#444"/><rect x="2" y="11.800" width="17.500" height="3.900" fill="#f0a8a8"/><path d="M1 11h19.500M1 16.300h19.500M7.500 6v15M13.800 6v15" stroke="#444" stroke-width="1.300" fill="none"/><path d="M17.500 4.500h8" stroke="#d02030" stroke-width="2.400"/></svg>
<svg style="left:1061px;top:48px" width="30" height="24"><rect x="1.500" y="4.500" width="18.500" height="16.500" fill="#fff" stroke="#444" stroke-width="1.600"/><rect x="1" y="4" width="19.500" height="3" fill="#444"/><rect x="8.200" y="7.500" width="5" height="13" fill="#a8d8a8"/><path d="M1 11h19.500M1 16.300h19.500M7.500 6v15M13.800 6v15" stroke="#444" stroke-width="1.300" fill="none"/><path d="M17 5.500h8M21 1.500v8" stroke="#1f9a1f" stroke-width="2.500"/></svg>
<svg style="left:1112px;top:45px" width="30" height="30"><path d="M2.500 7.500h15.500M2.500 7.500v17.500l3.500 3h17v-11" stroke="#444" stroke-width="1.700" fill="none"/><path d="M7.500 7.500v6.500h8v-4" stroke="#444" stroke-width="1.500" fill="none"/><path d="M8 28v-7.500h10.500v7.500" stroke="#444" stroke-width="1.500" fill="none"/><path d="M15.500 15l8-9 2.500 2.200-8 9-3.200 1z" fill="#444"/><circle cx="25.500" cy="4.500" r="2" fill="#444"/></svg>
<div style="left:1158px;top:47px;width:187px;height:27px;background:#fff;border:1px solid #c4c4c4;border-radius:4px"></div>
<div style="left:1319px;top:48px;width:1px;height:25px;background:#c4c4c4"></div>
<span class="t" style="left:1167px;top:53px;font-size:15.3px;letter-spacing:-0.65px;color:#111">Examples_02</span>
<svg style="left:1324px;top:55px" width="16" height="12"><path d="M2 3l5 5 5-5" stroke="#444" stroke-width="1.2" fill="none"/></svg>
<div style="left:956px;top:84px;width:652px;height:809px;background:#fff;overflow:hidden" id="tbl">
<div style="left:0;top:30px;width:651px;height:2px;background:#ececec"></div>
<span class="t" style="left:1px;top:8px;width:35px;text-align:center;font-size:15.700px;color:#111">#</span>
<span class="t" style="left:38px;top:8px;width:223px;text-align:center;font-size:15.700px;color:#111">Structure</span>
<span class="t" style="left:263px;top:8px;width:78px;text-align:center;font-size:15.700px;color:#111">Example</span>
<span class="t" style="left:343px;top:8px;width:32px;text-align:center;font-size:15.700px;color:#111">ID</span>
<span class="t" style="left:377px;top:8px;width:67px;text-align:center;font-size:15.700px;color:#111">Activity</span>
<span class="t" style="left:446px;top:8px;width:102px;text-align:center;font-size:15.700px;color:#111">Preparation</span>
<div style="left:0;top:180px;width:549px;height:2px;background:#dcdcdc"></div>
<div style="left:262px;top:32px;width:285px;height:148px;background:#bfe0ff"></div>
<div style="left:37px;top:32px;width:223px;height:148px;background:#ff9f9f"></div>
<span class="t" style="left:0;top:99px;width:36px;text-align:center;font-size:15.500px;font-weight:bold;">3</span>
<span class="t" style="left:266px;top:99px;font-size:15.500px"></span>
<span class="t" style="left:346px;top:66px;font-size:15.500px">C</span>
<span class="t" style="left:346px;top:88px;font-size:15.500px">D</span>
<span class="t" style="left:346px;top:111px;font-size:15.500px">20</span>
<span class="t" style="left:346px;top:133px;font-size:15.500px">3</span>
<span class="t" style="left:448px;top:43.5px;font-size:15.500px;">LiHMDS (4.4</span>
<span class="t" style="left:448px;top:66.0px;font-size:15.500px;">eq) was</span>
<span class="t" style="left:448px;top:88.5px;font-size:15.500px;">added to</span>
<span class="t" style="left:448px;top:111.0px;font-size:15.500px;">ethyl</span>
<span class="t" style="left:448px;top:133.5px;font-size:15.500px;letter-spacing:0.300px">1H-benzimid</span>
<span class="t" style="left:448px;top:156.0px;font-size:15.500px;">a<span style="position:static;letter-spacing:-1.400px">...</span></span>
<svg style="left:-956px;top:-84px" width="1626" height="920"><g stroke-linecap="round" fill="none"><line x1="1084.2" y1="212.6" x2="1072.5" y2="218.9" stroke="#11a011" stroke-width="1.4"/><line x1="1084" y1="215.7" x2="1073.8" y2="221.2" stroke="#11a011" stroke-width="1.4"/><line x1="1068" y1="226.6" x2="1068" y2="239.6" stroke="#11a011" stroke-width="1.4"/><line x1="1068" y1="239.6" x2="1079.7" y2="246.4" stroke="#11a011" stroke-width="1.4"/><line x1="1070.7" y1="238.1" x2="1081" y2="244.1" stroke="#11a011" stroke-width="1.4"/><line x1="1088.7" y1="246.4" x2="1100.2" y2="239.9" stroke="#11a011" stroke-width="1.4"/><line x1="1100.2" y1="239.9" x2="1100.2" y2="221.4" stroke="#11a011" stroke-width="1.4"/><line x1="1100.2" y1="221.4" x2="1084.2" y2="212.6" stroke="#11a011" stroke-width="1.4"/><line x1="1100.2" y1="221.4" x2="1116.2" y2="212.6" stroke="#11a011" stroke-width="1.4"/><line x1="1103.4" y1="222.6" x2="1115.6" y2="216" stroke="#11a011" stroke-width="1.4"/><line x1="1116.2" y1="212.6" x2="1132.4" y2="221.7" stroke="#11a011" stroke-width="1.4"/><line x1="1132.4" y1="221.7" x2="1132.4" y2="239.9" stroke="#11a011" stroke-width="1.4"/><line x1="1129.8" y1="223.9" x2="1129.8" y2="237.7" stroke="#11a011" stroke-width="1.4"/><line x1="1132.4" y1="239.9" x2="1116.2" y2="249.1" stroke="#11a011" stroke-width="1.4"/><line x1="1116.2" y1="249.1" x2="1100.2" y2="239.9" stroke="#11a011" stroke-width="1.4"/><line x1="1115.6" y1="245.8" x2="1103.4" y2="238.7" stroke="#11a011" stroke-width="1.4"/><line x1="1068.3" y1="184.5" x2="1068.3" y2="166.4" stroke="#11a011" stroke-width="1.4"/><line x1="1068.3" y1="166.4" x2="1052.3" y2="157.3" stroke="#11a011" stroke-width="1.4"/><line x1="1065.1" y1="167.5" x2="1052.9" y2="160.6" stroke="#11a011" stroke-width="1.4"/><line x1="1052.3" y1="157.3" x2="1036.3" y2="166.4" stroke="#11a011" stroke-width="1.4"/><line x1="1036.3" y1="166.4" x2="1036.3" y2="185" stroke="#11a011" stroke-width="1.4"/><line x1="1038.9" y1="168.6" x2="1038.9" y2="182.8" stroke="#11a011" stroke-width="1.4"/><line x1="1036.3" y1="185" x2="1052.3" y2="194.1" stroke="#11a011" stroke-width="1.4"/><line x1="1052.3" y1="194.1" x2="1068.3" y2="184.5" stroke="#11a011" stroke-width="1.4"/><line x1="1052.9" y1="190.7" x2="1065.1" y2="183.5" stroke="#11a011" stroke-width="1.4"/><line x1="1084.2" y1="212.6" x2="1085.4" y2="198.4" stroke="#11a011" stroke-width="1.4"/><line x1="1081.2" y1="191" x2="1068.3" y2="184.5" stroke="#11a011" stroke-width="1.4"/><line x1="1036.3" y1="166.4" x2="1025.4" y2="159.9" stroke="#11a011" stroke-width="1.4"/><line x1="1068.3" y1="166.4" x2="1079.7" y2="159.9" stroke="#11a011" stroke-width="1.4"/><line x1="1084.2" y1="152.1" x2="1084.2" y2="138.8" stroke="#11a011" stroke-width="1.4"/><line x1="1084.2" y1="138.8" x2="1072.7" y2="131.3" stroke="#11a011" stroke-width="1.4"/><line x1="1084.2" y1="138.8" x2="1095.1" y2="131.4" stroke="#11a011" stroke-width="1.4"/><line x1="1116.2" y1="212.6" x2="1115.4" y2="198.5" stroke="#11a011" stroke-width="1.4"/><line x1="1132.4" y1="221.7" x2="1142.9" y2="215.1" stroke="#11a011" stroke-width="1.4"/><line x1="1147.5" y1="207.1" x2="1148.1" y2="194.1" stroke="#11a011" stroke-width="1.4"/><line x1="1148.1" y1="194.1" x2="1159.4" y2="187.2" stroke="#11a011" stroke-width="1.4"/><line x1="1132.4" y1="239.9" x2="1143.7" y2="246.5" stroke="#11a011" stroke-width="1.4"/><line x1="1153.3" y1="247.8" x2="1159.9" y2="244" stroke="#11a011" stroke-width="1.4"/><line x1="1152" y1="245.5" x2="1158.7" y2="241.8" stroke="#11a011" stroke-width="1.4"/><line x1="1165.1" y1="235.2" x2="1165.1" y2="226.6" stroke="#11a011" stroke-width="1.4"/><line x1="1162.5" y1="235.2" x2="1162.5" y2="226.6" stroke="#11a011" stroke-width="1.4"/><line x1="1167.4" y1="236.7" x2="1173.1" y2="230.9" stroke="#11a011" stroke-width="1.4"/><line x1="1168.3" y1="242.9" x2="1175" y2="246.6" stroke="#11a011" stroke-width="1.4"/><text x="1068" y="224.1" font-size="7.6" fill="#11a011" stroke="none" text-anchor="middle" font-weight="bold">N</text><text x="1084.2" y="251.7" font-size="7.6" fill="#11a011" stroke="none" text-anchor="middle" font-weight="bold">N</text><text x="1083.1" y="196" font-size="7.6" fill="#11a011" stroke="none" text-anchor="start" font-weight="bold">NH</text><text x="1020.5" y="160" font-size="7.6" fill="#11a011" stroke="none" text-anchor="middle" font-weight="bold">Cl</text><text x="1084.2" y="160" font-size="7.6" fill="#11a011" stroke="none" text-anchor="middle" font-weight="bold">O</text><text x="1069.8" y="131.3" font-size="7.6" fill="#11a011" stroke="none" text-anchor="end" font-weight="bold">H<tspan font-size="4.7" dy="1.7">3</tspan><tspan dy="-1.7">C</tspan></text><text x="1097.9" y="131.3" font-size="7.6" fill="#11a011" stroke="none" text-anchor="start" font-weight="bold">CH<tspan font-size="4.7" dy="1.7">3</tspan></text><text x="1113.6" y="196" font-size="7.6" fill="#11a011" stroke="none" text-anchor="start" font-weight="bold">CH<tspan font-size="4.7" dy="1.7">3</tspan></text><text x="1147.3" y="215" font-size="7.6" fill="#11a011" stroke="none" text-anchor="middle" font-weight="bold">O</text><text x="1162.3" y="187.3" font-size="7.6" fill="#11a011" stroke="none" text-anchor="start" font-weight="bold">CH<tspan font-size="4.7" dy="1.7">3</tspan></text><text x="1148.1" y="251.9" font-size="7.6" fill="#11a011" stroke="none" text-anchor="middle" font-weight="bold">N</text><text x="1163.8" y="243.1" font-size="7.6" fill="#11a011" stroke="none" text-anchor="middle" font-weight="bold">S</text><text x="1163.8" y="224.1" font-size="7.6" fill="#11a011" stroke="none" text-anchor="middle" font-weight="bold">O</text><text x="1175.2" y="229.9" font-size="7.6" fill="#11a011" stroke="none" text-anchor="start" font-weight="bold">CH<tspan font-size="4.7" dy="1.7">3</tspan></text><text x="1178" y="251.9" font-size="7.6" fill="#11a011" stroke="none" text-anchor="start" font-weight="bold">CH<tspan font-size="4.7" dy="1.7">3</tspan></text></g></svg>
<div style="left:0;top:330px;width:549px;height:2px;background:#dcdcdc"></div>
<div style="left:37px;top:182px;width:223px;height:148px;background:#ffe0e2"></div>
<span class="t" style="left:0;top:249px;width:36px;text-align:center;font-size:15.500px;">4</span>
<span class="t" style="left:266px;top:249px;font-size:15.500px">81</span>
<span class="t" style="left:346px;top:216px;font-size:15.500px">C</span>
<span class="t" style="left:346px;top:238px;font-size:15.500px">D</span>
<span class="t" style="left:346px;top:261px;font-size:15.500px">20</span>
<span class="t" style="left:346px;top:283px;font-size:15.500px">4</span>
<span class="t" style="left:380px;top:238px;font-size:15.500px;letter-spacing:1px">++</span>
<span class="t" style="left:380px;top:261px;font-size:15.500px;letter-spacing:1px">+</span>
<span class="t" style="left:448px;top:193.5px;font-size:15.500px;">LiHMDS (4.4</span>
<span class="t" style="left:448px;top:216.0px;font-size:15.500px;">eq) was</span>
<span class="t" style="left:448px;top:238.5px;font-size:15.500px;">added to</span>
<span class="t" style="left:448px;top:261.0px;font-size:15.500px;">ethyl</span>
<span class="t" style="left:448px;top:283.5px;font-size:15.500px;letter-spacing:0.300px">1H-benzimid</span>
<span class="t" style="left:448px;top:306.0px;font-size:15.500px;">a<span style="position:static;letter-spacing:-1.400px">...</span></span>
<svg style="left:-956px;top:-84px" width="1626" height="920"><g stroke-linecap="round" fill="none"><line x1="1074.9" y1="349.9" x2="1069.7" y2="352.9" stroke="#1c1c1c" stroke-width="1.15"/><line x1="1069.7" y1="352.9" x2="1064.5" y2="355.8" stroke="#3344cc" stroke-width="1.15"/><line x1="1074.7" y1="352.4" x2="1070.1" y2="355" stroke="#1c1c1c" stroke-width="1.15"/><line x1="1070.1" y1="355" x2="1065.5" y2="357.6" stroke="#3344cc" stroke-width="1.15"/><line x1="1061.1" y1="361.8" x2="1061.1" y2="367.9" stroke="#3344cc" stroke-width="1.15"/><line x1="1061.1" y1="367.9" x2="1061.1" y2="373.9" stroke="#1c1c1c" stroke-width="1.15"/><line x1="1061.1" y1="373.9" x2="1066.3" y2="376.8" stroke="#1c1c1c" stroke-width="1.15"/><line x1="1066.3" y1="376.8" x2="1071.5" y2="379.8" stroke="#3344cc" stroke-width="1.15"/><line x1="1063.3" y1="372.8" x2="1067.9" y2="375.5" stroke="#1c1c1c" stroke-width="1.15"/><line x1="1067.9" y1="375.5" x2="1072.4" y2="378.1" stroke="#3344cc" stroke-width="1.15"/><line x1="1078.4" y1="379.8" x2="1083.5" y2="376.8" stroke="#3344cc" stroke-width="1.15"/><line x1="1083.5" y1="376.8" x2="1088.6" y2="373.9" stroke="#1c1c1c" stroke-width="1.15"/><line x1="1088.6" y1="373.9" x2="1088.6" y2="357.8" stroke="#1c1c1c" stroke-width="1.15"/><line x1="1088.6" y1="357.8" x2="1074.9" y2="349.9" stroke="#1c1c1c" stroke-width="1.15"/><line x1="1088.6" y1="357.8" x2="1102.7" y2="349.9" stroke="#1c1c1c" stroke-width="1.15"/><line x1="1091.3" y1="358.6" x2="1102" y2="352.6" stroke="#1c1c1c" stroke-width="1.15"/><line x1="1102.7" y1="349.9" x2="1116.4" y2="357.8" stroke="#1c1c1c" stroke-width="1.15"/><line x1="1116.4" y1="357.8" x2="1116.4" y2="373.9" stroke="#1c1c1c" stroke-width="1.15"/><line x1="1114.4" y1="359.8" x2="1114.4" y2="371.9" stroke="#1c1c1c" stroke-width="1.15"/><line x1="1116.4" y1="373.9" x2="1102.7" y2="381.8" stroke="#1c1c1c" stroke-width="1.15"/><line x1="1102.7" y1="381.8" x2="1088.6" y2="373.9" stroke="#1c1c1c" stroke-width="1.15"/><line x1="1102" y1="379.1" x2="1091.3" y2="373.1" stroke="#1c1c1c" stroke-width="1.15"/><line x1="1060.6" y1="326" x2="1060.6" y2="309.9" stroke="#1c1c1c" stroke-width="1.15"/><line x1="1060.6" y1="309.9" x2="1046.5" y2="302" stroke="#1c1c1c" stroke-width="1.15"/><line x1="1057.9" y1="310.7" x2="1047.2" y2="304.7" stroke="#1c1c1c" stroke-width="1.15"/><line x1="1046.5" y1="302" x2="1032.8" y2="309.9" stroke="#1c1c1c" stroke-width="1.15"/><line x1="1032.8" y1="309.9" x2="1032.8" y2="326" stroke="#1c1c1c" stroke-width="1.15"/><line x1="1034.8" y1="311.9" x2="1034.8" y2="324" stroke="#1c1c1c" stroke-width="1.15"/><line x1="1032.8" y1="326" x2="1046.5" y2="333.9" stroke="#1c1c1c" stroke-width="1.15"/><line x1="1046.5" y1="333.9" x2="1060.6" y2="326" stroke="#1c1c1c" stroke-width="1.15"/><line x1="1047.2" y1="331.2" x2="1057.9" y2="325.2" stroke="#1c1c1c" stroke-width="1.15"/><line x1="1116.4" y1="373.9" x2="1121.8" y2="376.9" stroke="#1c1c1c" stroke-width="1.15"/><line x1="1121.8" y1="376.9" x2="1127.3" y2="379.9" stroke="#3344cc" stroke-width="1.15"/><line x1="1134.8" y1="380.7" x2="1137.5" y2="379.1" stroke="#3344cc" stroke-width="1.15"/><line x1="1137.5" y1="379.1" x2="1140.2" y2="377.6" stroke="#9a8a18" stroke-width="1.15"/><line x1="1133.8" y1="378.9" x2="1136.5" y2="377.4" stroke="#3344cc" stroke-width="1.15"/><line x1="1136.5" y1="377.4" x2="1139.2" y2="375.8" stroke="#9a8a18" stroke-width="1.15"/><line x1="1144.4" y1="370.7" x2="1144.6" y2="366.9" stroke="#9a8a18" stroke-width="1.15"/><line x1="1144.6" y1="366.9" x2="1144.8" y2="363.1" stroke="#e8201c" stroke-width="1.15"/><line x1="1142.4" y1="370.6" x2="1142.6" y2="366.8" stroke="#9a8a18" stroke-width="1.15"/><line x1="1142.6" y1="366.8" x2="1142.8" y2="362.9" stroke="#e8201c" stroke-width="1.15"/><line x1="1074.9" y1="349.9" x2="1075.3" y2="343.8" stroke="#1c1c1c" stroke-width="1.15"/><line x1="1075.3" y1="343.8" x2="1075.7" y2="337.7" stroke="#3344cc" stroke-width="1.15"/><line x1="1072.3" y1="331.9" x2="1066.5" y2="328.9" stroke="#3344cc" stroke-width="1.15"/><line x1="1066.5" y1="328.9" x2="1060.6" y2="326" stroke="#1c1c1c" stroke-width="1.15"/><line x1="1032.8" y1="309.9" x2="1027.4" y2="306.9" stroke="#1c1c1c" stroke-width="1.15"/><line x1="1027.4" y1="306.9" x2="1021.9" y2="303.9" stroke="#b8923c" stroke-width="1.15"/><line x1="1060.6" y1="309.9" x2="1065.6" y2="307" stroke="#1c1c1c" stroke-width="1.15"/><line x1="1065.6" y1="307" x2="1070.6" y2="304" stroke="#e8201c" stroke-width="1.15"/><line x1="1074.2" y1="298" x2="1074.4" y2="291.7" stroke="#e8201c" stroke-width="1.15"/><line x1="1074.4" y1="291.7" x2="1074.6" y2="285.5" stroke="#1c1c1c" stroke-width="1.15"/><line x1="1074.6" y1="285.5" x2="1065.1" y2="279.1" stroke="#1c1c1c" stroke-width="1.15"/><line x1="1074.6" y1="285.5" x2="1085.4" y2="279" stroke="#1c1c1c" stroke-width="1.15"/><line x1="1102.7" y1="349.9" x2="1102.7" y2="337.6" stroke="#1c1c1c" stroke-width="1.15"/><line x1="1116.4" y1="357.8" x2="1121.6" y2="354.9" stroke="#1c1c1c" stroke-width="1.15"/><line x1="1121.6" y1="354.9" x2="1126.8" y2="351.9" stroke="#e8201c" stroke-width="1.15"/><line x1="1130.6" y1="345.9" x2="1131" y2="342.3" stroke="#e8201c" stroke-width="1.15"/><line x1="1131" y1="342.3" x2="1131.3" y2="338.8" stroke="#1c1c1c" stroke-width="1.15"/><line x1="1147.2" y1="375" x2="1153.3" y2="375.5" stroke="#9a8a18" stroke-width="1.15"/><line x1="1153.3" y1="375.5" x2="1159.4" y2="376" stroke="#1c1c1c" stroke-width="1.15"/><line x1="1159.4" y1="376" x2="1158" y2="391.2" stroke="#1c1c1c" stroke-width="1.15"/><line x1="1158" y1="391.2" x2="1142.3" y2="390.9" stroke="#1c1c1c" stroke-width="1.15"/><line x1="1142.3" y1="390.9" x2="1142.6" y2="384.8" stroke="#1c1c1c" stroke-width="1.15"/><line x1="1142.6" y1="384.8" x2="1143" y2="378.7" stroke="#9a8a18" stroke-width="1.15"/><line x1="1158" y1="391.2" x2="1162.2" y2="395.9" stroke="#1c1c1c" stroke-width="1.15"/><line x1="1162.2" y1="395.9" x2="1166.4" y2="400.6" stroke="#e8201c" stroke-width="1.15"/><line x1="1172.3" y1="401.2" x2="1175.8" y2="398.6" stroke="#e8201c" stroke-width="1.15"/><line x1="1175.8" y1="398.6" x2="1179.3" y2="396.1" stroke="#1c1c1c" stroke-width="1.15"/><text x="1061.1" y="360" font-size="5.9" fill="#3344cc" stroke="none" text-anchor="middle">N</text><text x="1074.9" y="383.9" font-size="5.9" fill="#3344cc" stroke="none" text-anchor="middle">N</text><text x="1073.8" y="335.8" font-size="5.9" fill="#3344cc" stroke="none" text-anchor="start">NH</text><text x="1018.4" y="304.1" font-size="5.9" fill="#b8923c" stroke="none" text-anchor="middle">F</text><text x="1074.1" y="304.1" font-size="5.9" fill="#e8201c" stroke="none" text-anchor="middle">O</text><text x="1063.2" y="279" font-size="5" fill="#1c1c1c" stroke="none" text-anchor="end">H<tspan font-size="3.1" dy="1.1">3</tspan><tspan dy="-1.1">C</tspan></text><text x="1087.3" y="279" font-size="5" fill="#1c1c1c" stroke="none" text-anchor="start">CH<tspan font-size="3.1" dy="1.1">3</tspan></text><text x="1101.7" y="336" font-size="5" fill="#1c1c1c" stroke="none" text-anchor="start">CH<tspan font-size="3.1" dy="1.1">3</tspan></text><text x="1130.3" y="352" font-size="5.9" fill="#e8201c" stroke="none" text-anchor="middle">O</text><text x="1130.6" y="337.2" font-size="5" fill="#1c1c1c" stroke="none" text-anchor="start">CH<tspan font-size="3.1" dy="1.1">3</tspan></text><text x="1130.8" y="383.9" font-size="5.9" fill="#3344cc" stroke="none" text-anchor="middle">N</text><text x="1143.2" y="376.8" font-size="5.9" fill="#9a8a18" stroke="none" text-anchor="middle">S</text><text x="1144" y="361.1" font-size="5.9" fill="#e8201c" stroke="none" text-anchor="middle">O</text><text x="1169.1" y="405.7" font-size="5.9" fill="#e8201c" stroke="none" text-anchor="middle">O</text><text x="1181" y="395.8" font-size="5" fill="#1c1c1c" stroke="none" text-anchor="start">CH<tspan font-size="3.1" dy="1.1">3</tspan></text></g></svg>
<div style="left:0;top:480px;width:549px;height:2px;background:#dcdcdc"></div>
<div style="left:37px;top:332px;width:223px;height:148px;background:#ffe0e2"></div>
<span class="t" style="left:0;top:399px;width:36px;text-align:center;font-size:15.500px;">5</span>
<span class="t" style="left:266px;top:399px;font-size:15.500px">82</span>
<span class="t" style="left:346px;top:366px;font-size:15.500px">C</span>
<span class="t" style="left:346px;top:388px;font-size:15.500px">D</span>
<span class="t" style="left:346px;top:411px;font-size:15.500px">20</span>
<span class="t" style="left:346px;top:433px;font-size:15.500px">5</span>
<span class="t" style="left:380px;top:400px;font-size:15.500px;letter-spacing:1px">+</span>
<span class="t" style="left:448px;top:343.5px;font-size:15.500px;">LiHMDS (4.4</span>
<span class="t" style="left:448px;top:366.0px;font-size:15.500px;">eq) was</span>
<span class="t" style="left:448px;top:388.5px;font-size:15.500px;">added to</span>
<span class="t" style="left:448px;top:411.0px;font-size:15.500px;">ethyl</span>
<span class="t" style="left:448px;top:433.5px;font-size:15.500px;letter-spacing:0.300px">1H-benzimid</span>
<span class="t" style="left:448px;top:456.0px;font-size:15.500px;">a<span style="position:static;letter-spacing:-1.400px">...</span></span>
<svg style="left:-956px;top:-84px" width="1626" height="920"><g stroke-linecap="round" fill="none"><line x1="1083.4" y1="524.7" x2="1078.9" y2="527" stroke="#1c1c1c" stroke-width="1.15"/><line x1="1078.9" y1="527" x2="1074.5" y2="529.4" stroke="#3344cc" stroke-width="1.15"/><line x1="1083.2" y1="527" x2="1079.3" y2="529.1" stroke="#1c1c1c" stroke-width="1.15"/><line x1="1079.3" y1="529.1" x2="1075.5" y2="531.2" stroke="#3344cc" stroke-width="1.15"/><line x1="1071" y1="535.3" x2="1071" y2="540.3" stroke="#3344cc" stroke-width="1.15"/><line x1="1071" y1="540.3" x2="1071" y2="545.3" stroke="#1c1c1c" stroke-width="1.15"/><line x1="1071" y1="545.3" x2="1075.4" y2="548" stroke="#1c1c1c" stroke-width="1.15"/><line x1="1075.4" y1="548" x2="1079.9" y2="550.7" stroke="#3344cc" stroke-width="1.15"/><line x1="1073.1" y1="544.3" x2="1077" y2="546.6" stroke="#1c1c1c" stroke-width="1.15"/><line x1="1077" y1="546.6" x2="1080.9" y2="549" stroke="#3344cc" stroke-width="1.15"/><line x1="1086.8" y1="550.6" x2="1091" y2="548" stroke="#3344cc" stroke-width="1.15"/><line x1="1091" y1="548" x2="1095.3" y2="545.3" stroke="#1c1c1c" stroke-width="1.15"/><line x1="1095.3" y1="545.3" x2="1095.3" y2="531.6" stroke="#1c1c1c" stroke-width="1.15"/><line x1="1095.3" y1="531.6" x2="1083.4" y2="524.7" stroke="#1c1c1c" stroke-width="1.15"/><line x1="1095.3" y1="531.6" x2="1107.6" y2="524.7" stroke="#1c1c1c" stroke-width="1.15"/><line x1="1097.7" y1="532.5" x2="1107.1" y2="527.3" stroke="#1c1c1c" stroke-width="1.15"/><line x1="1107.6" y1="524.7" x2="1119.7" y2="531.6" stroke="#1c1c1c" stroke-width="1.15"/><line x1="1119.7" y1="531.6" x2="1119.7" y2="545.7" stroke="#1c1c1c" stroke-width="1.15"/><line x1="1117.7" y1="533.3" x2="1117.7" y2="544" stroke="#1c1c1c" stroke-width="1.15"/><line x1="1119.7" y1="545.7" x2="1107.6" y2="552.8" stroke="#1c1c1c" stroke-width="1.15"/><line x1="1107.6" y1="552.8" x2="1095.3" y2="545.3" stroke="#1c1c1c" stroke-width="1.15"/><line x1="1107.2" y1="550.2" x2="1097.8" y2="544.5" stroke="#1c1c1c" stroke-width="1.15"/><line x1="1072.1" y1="504" x2="1072.1" y2="490" stroke="#1c1c1c" stroke-width="1.15"/><line x1="1072.1" y1="490" x2="1059.7" y2="483.1" stroke="#1c1c1c" stroke-width="1.15"/><line x1="1069.7" y1="490.9" x2="1060.2" y2="485.6" stroke="#1c1c1c" stroke-width="1.15"/><line x1="1059.7" y1="483.1" x2="1047.7" y2="490" stroke="#1c1c1c" stroke-width="1.15"/><line x1="1047.7" y1="490" x2="1047.7" y2="504" stroke="#1c1c1c" stroke-width="1.15"/><line x1="1049.7" y1="491.7" x2="1049.7" y2="502.4" stroke="#1c1c1c" stroke-width="1.15"/><line x1="1047.7" y1="504" x2="1059.7" y2="511.1" stroke="#1c1c1c" stroke-width="1.15"/><line x1="1059.7" y1="511.1" x2="1072.1" y2="504" stroke="#1c1c1c" stroke-width="1.15"/><line x1="1060.2" y1="508.6" x2="1069.6" y2="503.2" stroke="#1c1c1c" stroke-width="1.15"/><line x1="1119.7" y1="545.7" x2="1123.6" y2="548.1" stroke="#1c1c1c" stroke-width="1.15"/><line x1="1123.6" y1="548.1" x2="1127.4" y2="550.6" stroke="#3344cc" stroke-width="1.15"/><line x1="1134.7" y1="551.6" x2="1137.2" y2="550.1" stroke="#3344cc" stroke-width="1.15"/><line x1="1137.2" y1="550.1" x2="1139.7" y2="548.6" stroke="#9a8a18" stroke-width="1.15"/><line x1="1133.7" y1="549.9" x2="1136.2" y2="548.4" stroke="#3344cc" stroke-width="1.15"/><line x1="1136.2" y1="548.4" x2="1138.7" y2="546.9" stroke="#9a8a18" stroke-width="1.15"/><line x1="1143.6" y1="541.6" x2="1143.5" y2="538.7" stroke="#9a8a18" stroke-width="1.15"/><line x1="1143.5" y1="538.7" x2="1143.4" y2="535.8" stroke="#e8201c" stroke-width="1.15"/><line x1="1141.6" y1="541.7" x2="1141.5" y2="538.8" stroke="#9a8a18" stroke-width="1.15"/><line x1="1141.5" y1="538.8" x2="1141.4" y2="535.8" stroke="#e8201c" stroke-width="1.15"/><line x1="1083.4" y1="524.7" x2="1083.7" y2="519.7" stroke="#1c1c1c" stroke-width="1.15"/><line x1="1083.7" y1="519.7" x2="1084" y2="514.7" stroke="#3344cc" stroke-width="1.15"/><line x1="1080.7" y1="508.7" x2="1076.4" y2="506.4" stroke="#3344cc" stroke-width="1.15"/><line x1="1076.4" y1="506.4" x2="1072.1" y2="504" stroke="#1c1c1c" stroke-width="1.15"/><line x1="1072.1" y1="490" x2="1075.8" y2="487.4" stroke="#1c1c1c" stroke-width="1.15"/><line x1="1075.8" y1="487.4" x2="1079.6" y2="484.8" stroke="#e8201c" stroke-width="1.15"/><polygon points="1083.7,468.5 1081.7,478.5 1084.5,478.6" fill="#e8201c" stroke="none"/><line x1="1083.7" y1="468.5" x2="1095.3" y2="461.1" stroke="#1c1c1c" stroke-width="1.15"/><line x1="1095.3" y1="461.1" x2="1093.5" y2="456.4" stroke="#1c1c1c" stroke-width="1.15"/><line x1="1093.5" y1="456.4" x2="1091.7" y2="451.6" stroke="#e8201c" stroke-width="1.15"/><line x1="1086.3" y1="447.9" x2="1081.4" y2="447.9" stroke="#e8201c" stroke-width="1.15"/><line x1="1081.4" y1="447.9" x2="1076.6" y2="447.9" stroke="#1c1c1c" stroke-width="1.15"/><line x1="1076.6" y1="447.9" x2="1072.6" y2="461.4" stroke="#1c1c1c" stroke-width="1.15"/><line x1="1072.6" y1="461.4" x2="1083.7" y2="468.5" stroke="#1c1c1c" stroke-width="1.15"/><line x1="1072.6" y1="461.4" x2="1067.4" y2="461.3" stroke="#1c1c1c" stroke-width="1.15"/><line x1="1067.4" y1="461.3" x2="1062.1" y2="461.2" stroke="#e8201c" stroke-width="1.15"/><line x1="1056.8" y1="457.3" x2="1055.4" y2="453" stroke="#e8201c" stroke-width="1.15"/><line x1="1055.4" y1="453" x2="1054" y2="448.7" stroke="#1c1c1c" stroke-width="1.15"/><line x1="1054" y1="448.7" x2="1064.7" y2="439.9" stroke="#1c1c1c" stroke-width="1.15"/><line x1="1064.7" y1="439.9" x2="1076.6" y2="447.9" stroke="#1c1c1c" stroke-width="1.15"/><line x1="1077.5" y1="446.1" x2="1077" y2="445.9" stroke="#1c1c1c" stroke-width="0.92"/><line x1="1078.4" y1="444.3" x2="1077.4" y2="443.9" stroke="#1c1c1c" stroke-width="0.92"/><line x1="1079.4" y1="442.5" x2="1077.8" y2="441.9" stroke="#1c1c1c" stroke-width="0.92"/><line x1="1080.3" y1="440.7" x2="1078.2" y2="440" stroke="#1c1c1c" stroke-width="0.92"/><line x1="1081.2" y1="438.9" x2="1078.6" y2="438" stroke="#1c1c1c" stroke-width="0.92"/><line x1="1071.8" y1="463.2" x2="1072.3" y2="463.4" stroke="#1c1c1c" stroke-width="0.92"/><line x1="1071" y1="465.1" x2="1072.1" y2="465.4" stroke="#1c1c1c" stroke-width="0.92"/><line x1="1070.2" y1="466.9" x2="1071.8" y2="467.4" stroke="#1c1c1c" stroke-width="0.92"/><line x1="1069.4" y1="468.7" x2="1071.5" y2="469.3" stroke="#1c1c1c" stroke-width="0.92"/><line x1="1068.6" y1="470.6" x2="1071.3" y2="471.3" stroke="#1c1c1c" stroke-width="0.92"/><line x1="1065" y1="437.9" x2="1064.4" y2="437.9" stroke="#b8923c" stroke-width="0.92"/><line x1="1065.3" y1="435.9" x2="1064.1" y2="435.9" stroke="#b8923c" stroke-width="0.92"/><line x1="1065.5" y1="433.9" x2="1063.9" y2="433.9" stroke="#b8923c" stroke-width="0.92"/><line x1="1065.8" y1="431.9" x2="1063.6" y2="431.9" stroke="#b8923c" stroke-width="0.92"/><line x1="1066.1" y1="429.9" x2="1063.3" y2="429.9" stroke="#b8923c" stroke-width="0.92"/><line x1="1107.6" y1="524.7" x2="1107.6" y2="514.9" stroke="#1c1c1c" stroke-width="1.15"/><line x1="1119.7" y1="531.6" x2="1123.8" y2="529.2" stroke="#1c1c1c" stroke-width="1.15"/><line x1="1123.8" y1="529.2" x2="1127.8" y2="526.8" stroke="#e8201c" stroke-width="1.15"/><line x1="1131.3" y1="520.7" x2="1131.3" y2="518.1" stroke="#e8201c" stroke-width="1.15"/><line x1="1131.3" y1="518.1" x2="1131.3" y2="515.5" stroke="#1c1c1c" stroke-width="1.15"/><line x1="1145.8" y1="543.1" x2="1148.1" y2="541.2" stroke="#9a8a18" stroke-width="1.15"/><line x1="1148.1" y1="541.2" x2="1150.4" y2="539.3" stroke="#1c1c1c" stroke-width="1.15"/><line x1="1146.1" y1="547.8" x2="1149" y2="549.5" stroke="#9a8a18" stroke-width="1.15"/><line x1="1149" y1="549.5" x2="1151.8" y2="551.3" stroke="#1c1c1c" stroke-width="1.15"/><text x="1071.3" y="441.9" font-size="5.1" fill="#222" stroke="none" text-anchor="middle" font-style="italic">(S)</text><text x="1082" y="454.3" font-size="5.1" fill="#222" stroke="none" text-anchor="middle" font-style="italic">(S)</text><text x="1078.7" y="463.4" font-size="5.1" fill="#222" stroke="none" text-anchor="middle" font-style="italic">(R)</text><text x="1089.8" y="471.5" font-size="5.1" fill="#222" stroke="none" text-anchor="middle" font-style="italic">(R)</text><text x="1071" y="533.4" font-size="5.9" fill="#3344cc" stroke="none" text-anchor="middle">N</text><text x="1083.4" y="554.9" font-size="5.9" fill="#3344cc" stroke="none" text-anchor="middle">N</text><text x="1082.1" y="512.8" font-size="5.9" fill="#3344cc" stroke="none" text-anchor="start">NH</text><text x="1082.9" y="484.7" font-size="5.9" fill="#e8201c" stroke="none" text-anchor="middle">O</text><text x="1090.3" y="450" font-size="5.9" fill="#e8201c" stroke="none" text-anchor="middle">O</text><text x="1058.1" y="463.2" font-size="5.9" fill="#e8201c" stroke="none" text-anchor="middle">O</text><text x="1081.2" y="436.8" font-size="5.9" fill="#1c1c1c" stroke="none" text-anchor="middle">H</text><text x="1068.8" y="476.9" font-size="5.9" fill="#1c1c1c" stroke="none" text-anchor="middle">H</text><text x="1064.7" y="428" font-size="5.9" fill="#b8923c" stroke="none" text-anchor="middle">F</text><text x="1106.6" y="513.3" font-size="5" fill="#1c1c1c" stroke="none" text-anchor="start">CH<tspan font-size="3.1" dy="1.1">3</tspan></text><text x="1131.3" y="526.8" font-size="5.9" fill="#e8201c" stroke="none" text-anchor="middle">O</text><text x="1130.3" y="513.9" font-size="5" fill="#1c1c1c" stroke="none" text-anchor="start">CH<tspan font-size="3.1" dy="1.1">3</tspan></text><text x="1130.8" y="554.9" font-size="5.9" fill="#3344cc" stroke="none" text-anchor="middle">N</text><text x="1142.7" y="547.8" font-size="5.9" fill="#9a8a18" stroke="none" text-anchor="middle">S</text><text x="1142.3" y="533.9" font-size="5.9" fill="#e8201c" stroke="none" text-anchor="middle">O</text><text x="1152.1" y="538.9" font-size="5" fill="#1c1c1c" stroke="none" text-anchor="start">CH<tspan font-size="3.1" dy="1.1">3</tspan></text><text x="1153.7" y="554.9" font-size="5" fill="#1c1c1c" stroke="none" text-anchor="start">CH<tspan font-size="3.1" dy="1.1">3</tspan></text></g></svg>
<div style="left:0;top:630px;width:549px;height:2px;background:#dcdcdc"></div>
<div style="left:37px;top:482px;width:223px;height:148px;background:#d0ffe0"></div>
<span class="t" style="left:0;top:549px;width:36px;text-align:center;font-size:15.500px;">6</span>
<span class="t" style="left:266px;top:549px;font-size:15.500px">83</span>
<span class="t" style="left:346px;top:516px;font-size:15.500px">C</span>
<span class="t" style="left:346px;top:538px;font-size:15.500px">D</span>
<span class="t" style="left:346px;top:561px;font-size:15.500px">20</span>
<span class="t" style="left:346px;top:583px;font-size:15.500px">6</span>
<span class="t" style="left:380px;top:550px;font-size:15.500px;letter-spacing:1px">+</span>
<span class="t" style="left:448px;top:493.5px;font-size:15.500px;">LiHMDS (4.4</span>
<span class="t" style="left:448px;top:516.0px;font-size:15.500px;">eq) was</span>
<span class="t" style="left:448px;top:538.5px;font-size:15.500px;">added to</span>
<span class="t" style="left:448px;top:561.0px;font-size:15.500px;">ethyl</span>
<span class="t" style="left:448px;top:583.5px;font-size:15.500px;letter-spacing:0.300px">1H-benzimid</span>
<span class="t" style="left:448px;top:606.0px;font-size:15.500px;">a<span style="position:static;letter-spacing:-1.400px">...</span></span>
<svg style="left:-956px;top:-84px" width="1626" height="920"><g stroke-linecap="round" fill="none"><line x1="1088.6" y1="667.3" x2="1084.4" y2="669.6" stroke="#1c1c1c" stroke-width="1.15"/><line x1="1084.4" y1="669.6" x2="1080.1" y2="671.9" stroke="#3344cc" stroke-width="1.15"/><line x1="1088.6" y1="669.6" x2="1084.8" y2="671.6" stroke="#1c1c1c" stroke-width="1.15"/><line x1="1084.8" y1="671.6" x2="1081.1" y2="673.7" stroke="#3344cc" stroke-width="1.15"/><line x1="1076.6" y1="677.9" x2="1076.6" y2="683.1" stroke="#3344cc" stroke-width="1.15"/><line x1="1076.6" y1="683.1" x2="1076.6" y2="688.2" stroke="#1c1c1c" stroke-width="1.15"/><line x1="1076.6" y1="688.2" x2="1080.9" y2="690.8" stroke="#1c1c1c" stroke-width="1.15"/><line x1="1080.9" y1="690.8" x2="1085.2" y2="693.3" stroke="#3344cc" stroke-width="1.15"/><line x1="1078.6" y1="687.1" x2="1082.4" y2="689.4" stroke="#1c1c1c" stroke-width="1.15"/><line x1="1082.4" y1="689.4" x2="1086.2" y2="691.6" stroke="#3344cc" stroke-width="1.15"/><line x1="1092.1" y1="693.3" x2="1096.4" y2="690.8" stroke="#3344cc" stroke-width="1.15"/><line x1="1096.4" y1="690.8" x2="1100.7" y2="688.2" stroke="#1c1c1c" stroke-width="1.15"/><line x1="1100.7" y1="688.2" x2="1100.7" y2="674.4" stroke="#1c1c1c" stroke-width="1.15"/><line x1="1100.7" y1="674.4" x2="1088.6" y2="667.3" stroke="#1c1c1c" stroke-width="1.15"/><line x1="1100.7" y1="674.4" x2="1112.9" y2="667.3" stroke="#1c1c1c" stroke-width="1.15"/><line x1="1103.2" y1="675.2" x2="1112.5" y2="669.8" stroke="#1c1c1c" stroke-width="1.15"/><line x1="1112.9" y1="667.3" x2="1125" y2="674.4" stroke="#1c1c1c" stroke-width="1.15"/><line x1="1125" y1="674.4" x2="1125" y2="688.2" stroke="#1c1c1c" stroke-width="1.15"/><line x1="1123" y1="676" x2="1123" y2="686.6" stroke="#1c1c1c" stroke-width="1.15"/><line x1="1125" y1="688.2" x2="1112.9" y2="695.3" stroke="#1c1c1c" stroke-width="1.15"/><line x1="1112.9" y1="695.3" x2="1100.7" y2="688.2" stroke="#1c1c1c" stroke-width="1.15"/><line x1="1112.5" y1="692.8" x2="1103.2" y2="687.4" stroke="#1c1c1c" stroke-width="1.15"/><line x1="1077.1" y1="646.1" x2="1077.1" y2="632.1" stroke="#1c1c1c" stroke-width="1.15"/><line x1="1077.1" y1="632.1" x2="1064.7" y2="625.1" stroke="#1c1c1c" stroke-width="1.15"/><line x1="1074.6" y1="633" x2="1065.2" y2="627.7" stroke="#1c1c1c" stroke-width="1.15"/><line x1="1064.7" y1="625.1" x2="1052.6" y2="632.1" stroke="#1c1c1c" stroke-width="1.15"/><line x1="1052.6" y1="632.1" x2="1052.6" y2="646.1" stroke="#1c1c1c" stroke-width="1.15"/><line x1="1054.6" y1="633.8" x2="1054.6" y2="644.4" stroke="#1c1c1c" stroke-width="1.15"/><line x1="1052.6" y1="646.1" x2="1064.7" y2="653.2" stroke="#1c1c1c" stroke-width="1.15"/><line x1="1064.7" y1="653.2" x2="1077.1" y2="646.1" stroke="#1c1c1c" stroke-width="1.15"/><line x1="1065.2" y1="650.6" x2="1074.6" y2="645.2" stroke="#1c1c1c" stroke-width="1.15"/><line x1="1125" y1="688.2" x2="1129.1" y2="690.9" stroke="#1c1c1c" stroke-width="1.15"/><line x1="1129.1" y1="690.9" x2="1133.2" y2="693.5" stroke="#3344cc" stroke-width="1.15"/><line x1="1140.5" y1="694.5" x2="1143" y2="693.1" stroke="#3344cc" stroke-width="1.15"/><line x1="1143" y1="693.1" x2="1145.5" y2="691.6" stroke="#9a8a18" stroke-width="1.15"/><line x1="1139.5" y1="692.8" x2="1142" y2="691.3" stroke="#3344cc" stroke-width="1.15"/><line x1="1142" y1="691.3" x2="1144.5" y2="689.9" stroke="#9a8a18" stroke-width="1.15"/><line x1="1149.4" y1="684.7" x2="1149.3" y2="681.9" stroke="#9a8a18" stroke-width="1.15"/><line x1="1149.3" y1="681.9" x2="1149.2" y2="679" stroke="#e8201c" stroke-width="1.15"/><line x1="1147.4" y1="684.7" x2="1147.3" y2="681.9" stroke="#9a8a18" stroke-width="1.15"/><line x1="1147.3" y1="681.9" x2="1147.2" y2="679.1" stroke="#e8201c" stroke-width="1.15"/><line x1="1088.6" y1="667.3" x2="1088.9" y2="662.1" stroke="#1c1c1c" stroke-width="1.15"/><line x1="1088.9" y1="662.1" x2="1089.2" y2="656.9" stroke="#3344cc" stroke-width="1.15"/><line x1="1086" y1="651" x2="1081.5" y2="648.5" stroke="#3344cc" stroke-width="1.15"/><line x1="1081.5" y1="648.5" x2="1077.1" y2="646.1" stroke="#1c1c1c" stroke-width="1.15"/><line x1="1052.6" y1="632.1" x2="1048.2" y2="629.1" stroke="#1c1c1c" stroke-width="1.15"/><line x1="1048.2" y1="629.1" x2="1043.7" y2="626.1" stroke="#b8923c" stroke-width="1.15"/><line x1="1077.1" y1="632.1" x2="1080.8" y2="629.6" stroke="#1c1c1c" stroke-width="1.15"/><line x1="1080.8" y1="629.6" x2="1084.5" y2="627" stroke="#e8201c" stroke-width="1.15"/><polygon points="1089,610.8 1086.8,620.7 1089.5,620.9" fill="#e8201c" stroke="none"/><line x1="1089" y1="610.8" x2="1100.2" y2="602.8" stroke="#1c1c1c" stroke-width="1.15"/><line x1="1100.2" y1="602.8" x2="1098.5" y2="598.3" stroke="#1c1c1c" stroke-width="1.15"/><line x1="1098.5" y1="598.3" x2="1096.7" y2="593.7" stroke="#e8201c" stroke-width="1.15"/><line x1="1091.2" y1="589.8" x2="1086.6" y2="589.7" stroke="#e8201c" stroke-width="1.15"/><line x1="1086.6" y1="589.7" x2="1082" y2="589.6" stroke="#1c1c1c" stroke-width="1.15"/><line x1="1082" y1="589.6" x2="1077.4" y2="603.2" stroke="#1c1c1c" stroke-width="1.15"/><line x1="1077.4" y1="603.2" x2="1089" y2="610.8" stroke="#1c1c1c" stroke-width="1.15"/><line x1="1077.4" y1="603.2" x2="1072.2" y2="603.2" stroke="#1c1c1c" stroke-width="1.15"/><line x1="1072.2" y1="603.2" x2="1067.1" y2="603.2" stroke="#e8201c" stroke-width="1.15"/><line x1="1062" y1="599.3" x2="1060.6" y2="594.4" stroke="#e8201c" stroke-width="1.15"/><line x1="1060.6" y1="594.4" x2="1059.2" y2="589.6" stroke="#1c1c1c" stroke-width="1.15"/><line x1="1059.2" y1="589.6" x2="1070.8" y2="580.5" stroke="#1c1c1c" stroke-width="1.15"/><line x1="1070.8" y1="580.5" x2="1082" y2="589.6" stroke="#1c1c1c" stroke-width="1.15"/><line x1="1082.9" y1="587.7" x2="1082.3" y2="587.6" stroke="#1c1c1c" stroke-width="0.92"/><line x1="1083.7" y1="585.8" x2="1082.6" y2="585.5" stroke="#1c1c1c" stroke-width="0.92"/><line x1="1084.5" y1="583.9" x2="1082.9" y2="583.5" stroke="#1c1c1c" stroke-width="0.92"/><line x1="1085.3" y1="582" x2="1083.1" y2="581.4" stroke="#1c1c1c" stroke-width="0.92"/><line x1="1086.1" y1="580.1" x2="1083.4" y2="579.4" stroke="#1c1c1c" stroke-width="0.92"/><line x1="1076.7" y1="604.9" x2="1077.3" y2="605" stroke="#1c1c1c" stroke-width="0.92"/><line x1="1076.1" y1="606.6" x2="1077.2" y2="606.9" stroke="#1c1c1c" stroke-width="0.92"/><line x1="1075.4" y1="608.4" x2="1077.1" y2="608.7" stroke="#1c1c1c" stroke-width="0.92"/><line x1="1074.8" y1="610.1" x2="1076.9" y2="610.6" stroke="#1c1c1c" stroke-width="0.92"/><line x1="1074.1" y1="611.8" x2="1076.8" y2="612.4" stroke="#1c1c1c" stroke-width="0.92"/><line x1="1112.9" y1="667.3" x2="1112.9" y2="657.1" stroke="#1c1c1c" stroke-width="1.15"/><line x1="1125" y1="674.4" x2="1128.9" y2="672.1" stroke="#1c1c1c" stroke-width="1.15"/><line x1="1128.9" y1="672.1" x2="1132.8" y2="669.8" stroke="#e8201c" stroke-width="1.15"/><line x1="1136.3" y1="663.7" x2="1136.4" y2="660.8" stroke="#e8201c" stroke-width="1.15"/><line x1="1136.4" y1="660.8" x2="1136.5" y2="657.8" stroke="#1c1c1c" stroke-width="1.15"/><line x1="1152.3" y1="687.6" x2="1157.2" y2="686.1" stroke="#9a8a18" stroke-width="1.15"/><line x1="1157.2" y1="686.1" x2="1162.2" y2="684.6" stroke="#1c1c1c" stroke-width="1.15"/><line x1="1162.2" y1="684.6" x2="1170.1" y2="695.3" stroke="#1c1c1c" stroke-width="1.15"/><line x1="1170.1" y1="695.3" x2="1162.2" y2="706.9" stroke="#1c1c1c" stroke-width="1.15"/><line x1="1162.2" y1="706.9" x2="1148.1" y2="702.8" stroke="#1c1c1c" stroke-width="1.15"/><line x1="1148.1" y1="702.8" x2="1148.2" y2="697.8" stroke="#1c1c1c" stroke-width="1.15"/><line x1="1148.2" y1="697.8" x2="1148.4" y2="692.7" stroke="#9a8a18" stroke-width="1.15"/><text x="1087.5" y="596.1" font-size="5.1" fill="#222" stroke="none" text-anchor="middle" font-style="italic">(R)</text><text x="1083.7" y="604.3" font-size="5.1" fill="#222" stroke="none" text-anchor="middle" font-style="italic">(S)</text><text x="1095.3" y="613.7" font-size="5.1" fill="#222" stroke="none" text-anchor="middle" font-style="italic">(R)</text><text x="1076.6" y="676" font-size="5.9" fill="#3344cc" stroke="none" text-anchor="middle">N</text><text x="1088.6" y="697.5" font-size="5.9" fill="#3344cc" stroke="none" text-anchor="middle">N</text><text x="1087.3" y="655" font-size="5.9" fill="#3344cc" stroke="none" text-anchor="start">NH</text><text x="1040.4" y="625.9" font-size="5.9" fill="#b8923c" stroke="none" text-anchor="middle">F</text><text x="1087.8" y="626.9" font-size="5.9" fill="#e8201c" stroke="none" text-anchor="middle">O</text><text x="1095.3" y="592.1" font-size="5.9" fill="#e8201c" stroke="none" text-anchor="middle">O</text><text x="1063" y="605.3" font-size="5.9" fill="#e8201c" stroke="none" text-anchor="middle">O</text><text x="1085.8" y="578" font-size="5.9" fill="#1c1c1c" stroke="none" text-anchor="middle">H</text><text x="1074.6" y="618.2" font-size="5.9" fill="#1c1c1c" stroke="none" text-anchor="middle">H</text><text x="1111.9" y="655.5" font-size="5" fill="#1c1c1c" stroke="none" text-anchor="start">CH<tspan font-size="3.1" dy="1.1">3</tspan></text><text x="1136.2" y="669.9" font-size="5.9" fill="#e8201c" stroke="none" text-anchor="middle">O</text><text x="1135.6" y="656.2" font-size="5" fill="#1c1c1c" stroke="none" text-anchor="start">CH<tspan font-size="3.1" dy="1.1">3</tspan></text><text x="1136.6" y="697.8" font-size="5.9" fill="#3344cc" stroke="none" text-anchor="middle">N</text><text x="1148.5" y="690.9" font-size="5.9" fill="#9a8a18" stroke="none" text-anchor="middle">S</text><text x="1148.1" y="677.1" font-size="5.9" fill="#e8201c" stroke="none" text-anchor="middle">O</text></g></svg>
<div style="left:0;top:780px;width:549px;height:2px;background:#dcdcdc"></div>
<div style="left:37px;top:632px;width:223px;height:148px;background:#d0ffe0"></div>
<span class="t" style="left:0;top:699px;width:36px;text-align:center;font-size:15.500px;">7</span>
<span class="t" style="left:266px;top:699px;font-size:15.500px">84</span>
<span class="t" style="left:346px;top:666px;font-size:15.500px">C</span>
<span class="t" style="left:346px;top:688px;font-size:15.500px">D</span>
<span class="t" style="left:346px;top:711px;font-size:15.500px">20</span>
<span class="t" style="left:346px;top:733px;font-size:15.500px">7</span>
<span class="t" style="left:380px;top:700px;font-size:15.500px;letter-spacing:1px">+</span>
<span class="t" style="left:448px;top:643.5px;font-size:15.500px;">LiHMDS (4.4</span>
<span class="t" style="left:448px;top:666.0px;font-size:15.500px;">eq) was</span>
<span class="t" style="left:448px;top:688.5px;font-size:15.500px;">added to</span>
<span class="t" style="left:448px;top:711.0px;font-size:15.500px;">ethyl</span>
<span class="t" style="left:448px;top:733.5px;font-size:15.500px;letter-spacing:0.300px">1H-benzimid</span>
<span class="t" style="left:448px;top:756.0px;font-size:15.500px;">a<span style="position:static;letter-spacing:-1.400px">...</span></span>
<svg style="left:-956px;top:-84px" width="1626" height="920"><g stroke-linecap="round" fill="none"><line x1="1086.2" y1="818.1" x2="1080.7" y2="821.1" stroke="#1c1c1c" stroke-width="1.15"/><line x1="1080.7" y1="821.1" x2="1075.3" y2="824.1" stroke="#3344cc" stroke-width="1.15"/><line x1="1085.8" y1="820.6" x2="1081.1" y2="823.2" stroke="#1c1c1c" stroke-width="1.15"/><line x1="1081.1" y1="823.2" x2="1076.3" y2="825.8" stroke="#3344cc" stroke-width="1.15"/><line x1="1071.8" y1="830" x2="1071.8" y2="836.3" stroke="#3344cc" stroke-width="1.15"/><line x1="1071.8" y1="836.3" x2="1071.8" y2="842.5" stroke="#1c1c1c" stroke-width="1.15"/><line x1="1071.8" y1="842.5" x2="1077.2" y2="845.7" stroke="#1c1c1c" stroke-width="1.15"/><line x1="1077.2" y1="845.7" x2="1082.7" y2="848.8" stroke="#3344cc" stroke-width="1.15"/><line x1="1074.1" y1="841.5" x2="1078.9" y2="844.3" stroke="#1c1c1c" stroke-width="1.15"/><line x1="1078.9" y1="844.3" x2="1083.7" y2="847.1" stroke="#3344cc" stroke-width="1.15"/><line x1="1089.6" y1="848.8" x2="1094.9" y2="845.6" stroke="#3344cc" stroke-width="1.15"/><line x1="1094.9" y1="845.6" x2="1100.2" y2="842.5" stroke="#1c1c1c" stroke-width="1.15"/><line x1="1100.2" y1="842.5" x2="1100.2" y2="826.3" stroke="#1c1c1c" stroke-width="1.15"/><line x1="1100.2" y1="826.3" x2="1086.2" y2="818.1" stroke="#1c1c1c" stroke-width="1.15"/><line x1="1100.2" y1="826.3" x2="1114.6" y2="818.1" stroke="#1c1c1c" stroke-width="1.15"/><line x1="1102.9" y1="827.1" x2="1113.9" y2="820.8" stroke="#1c1c1c" stroke-width="1.15"/><line x1="1114.6" y1="818.1" x2="1128.8" y2="826.3" stroke="#1c1c1c" stroke-width="1.15"/><line x1="1128.8" y1="826.3" x2="1128.8" y2="842.5" stroke="#1c1c1c" stroke-width="1.15"/><line x1="1126.8" y1="828.3" x2="1126.8" y2="840.6" stroke="#1c1c1c" stroke-width="1.15"/><line x1="1128.8" y1="842.5" x2="1114.6" y2="850.8" stroke="#1c1c1c" stroke-width="1.15"/><line x1="1114.6" y1="850.8" x2="1100.2" y2="842.5" stroke="#1c1c1c" stroke-width="1.15"/><line x1="1113.9" y1="848.1" x2="1102.9" y2="841.8" stroke="#1c1c1c" stroke-width="1.15"/><line x1="1073" y1="793" x2="1073" y2="776.4" stroke="#1c1c1c" stroke-width="1.15"/><line x1="1073" y1="776.4" x2="1058.6" y2="768.5" stroke="#1c1c1c" stroke-width="1.15"/><line x1="1070.3" y1="777.2" x2="1059.3" y2="771.2" stroke="#1c1c1c" stroke-width="1.15"/><line x1="1058.6" y1="768.5" x2="1044.4" y2="776.4" stroke="#1c1c1c" stroke-width="1.15"/><line x1="1044.4" y1="776.4" x2="1044.4" y2="793" stroke="#1c1c1c" stroke-width="1.15"/><line x1="1046.4" y1="778.4" x2="1046.4" y2="791" stroke="#1c1c1c" stroke-width="1.15"/><line x1="1044.4" y1="793" x2="1058.6" y2="801.1" stroke="#1c1c1c" stroke-width="1.15"/><line x1="1058.6" y1="801.1" x2="1073" y2="793" stroke="#1c1c1c" stroke-width="1.15"/><line x1="1059.3" y1="798.4" x2="1070.2" y2="792.2" stroke="#1c1c1c" stroke-width="1.15"/><line x1="1128.8" y1="842.5" x2="1134.2" y2="845.7" stroke="#1c1c1c" stroke-width="1.15"/><line x1="1134.2" y1="845.7" x2="1139.7" y2="848.8" stroke="#3344cc" stroke-width="1.15"/><line x1="1147.1" y1="849.6" x2="1150.3" y2="847.7" stroke="#3344cc" stroke-width="1.15"/><line x1="1150.3" y1="847.7" x2="1153.5" y2="845.8" stroke="#9a8a18" stroke-width="1.15"/><line x1="1146.1" y1="847.9" x2="1149.3" y2="846" stroke="#3344cc" stroke-width="1.15"/><line x1="1149.3" y1="846" x2="1152.4" y2="844.1" stroke="#9a8a18" stroke-width="1.15"/><line x1="1157.4" y1="838.8" x2="1157.4" y2="835" stroke="#9a8a18" stroke-width="1.15"/><line x1="1157.4" y1="835" x2="1157.4" y2="831.2" stroke="#e8201c" stroke-width="1.15"/><line x1="1155.4" y1="838.8" x2="1155.4" y2="835" stroke="#9a8a18" stroke-width="1.15"/><line x1="1155.4" y1="835" x2="1155.4" y2="831.2" stroke="#e8201c" stroke-width="1.15"/><line x1="1086.2" y1="818.1" x2="1086.6" y2="811.4" stroke="#1c1c1c" stroke-width="1.15"/><line x1="1086.6" y1="811.4" x2="1087.1" y2="804.7" stroke="#3344cc" stroke-width="1.15"/><line x1="1083.8" y1="798.8" x2="1078.4" y2="795.9" stroke="#3344cc" stroke-width="1.15"/><line x1="1078.4" y1="795.9" x2="1073" y2="793" stroke="#1c1c1c" stroke-width="1.15"/><line x1="1044.4" y1="776.4" x2="1038.8" y2="773.4" stroke="#1c1c1c" stroke-width="1.15"/><line x1="1038.8" y1="773.4" x2="1033.2" y2="770.4" stroke="#b8923c" stroke-width="1.15"/><line x1="1073" y1="776.4" x2="1077.8" y2="773.5" stroke="#1c1c1c" stroke-width="1.15"/><line x1="1077.8" y1="773.5" x2="1082.7" y2="770.6" stroke="#e8201c" stroke-width="1.15"/><line x1="1086.3" y1="764.5" x2="1086.4" y2="758.4" stroke="#e8201c" stroke-width="1.15"/><line x1="1086.4" y1="758.4" x2="1086.5" y2="752.3" stroke="#1c1c1c" stroke-width="1.15"/><line x1="1084.4" y1="750.7" x2="1084.1" y2="751.2" stroke="#1c1c1c" stroke-width="0.92"/><line x1="1082.3" y1="749.1" x2="1081.8" y2="750" stroke="#1c1c1c" stroke-width="0.92"/><line x1="1080.3" y1="747.4" x2="1079.4" y2="748.9" stroke="#1c1c1c" stroke-width="0.92"/><line x1="1078.2" y1="745.8" x2="1077" y2="747.7" stroke="#1c1c1c" stroke-width="0.92"/><line x1="1076.1" y1="744.2" x2="1074.6" y2="746.5" stroke="#1c1c1c" stroke-width="0.92"/><line x1="1086.5" y1="752.3" x2="1100.5" y2="743.7" stroke="#1c1c1c" stroke-width="1.15"/><line x1="1100.5" y1="743.7" x2="1100.5" y2="737.3" stroke="#1c1c1c" stroke-width="1.15"/><line x1="1100.5" y1="737.3" x2="1100.5" y2="730.9" stroke="#b8923c" stroke-width="1.15"/><line x1="1100.5" y1="743.7" x2="1105.2" y2="739" stroke="#1c1c1c" stroke-width="1.15"/><line x1="1105.2" y1="739" x2="1109.8" y2="734.2" stroke="#b8923c" stroke-width="1.15"/><line x1="1100.5" y1="743.7" x2="1105.7" y2="746.8" stroke="#1c1c1c" stroke-width="1.15"/><line x1="1105.7" y1="746.8" x2="1110.8" y2="749.9" stroke="#b8923c" stroke-width="1.15"/><line x1="1114.6" y1="818.1" x2="1114.6" y2="806.1" stroke="#1c1c1c" stroke-width="1.15"/><line x1="1128.8" y1="826.3" x2="1133.7" y2="823.6" stroke="#1c1c1c" stroke-width="1.15"/><line x1="1133.7" y1="823.6" x2="1138.5" y2="820.9" stroke="#e8201c" stroke-width="1.15"/><line x1="1142.3" y1="814.9" x2="1142.7" y2="809.1" stroke="#e8201c" stroke-width="1.15"/><line x1="1142.7" y1="809.1" x2="1143.2" y2="803.2" stroke="#1c1c1c" stroke-width="1.15"/><line x1="1143.2" y1="803.2" x2="1157.2" y2="794.5" stroke="#1c1c1c" stroke-width="1.15"/><line x1="1157.2" y1="794.5" x2="1157.1" y2="787.6" stroke="#1c1c1c" stroke-width="1.15"/><line x1="1157.1" y1="787.6" x2="1157" y2="780.8" stroke="#3344cc" stroke-width="1.15"/><line x1="1160.4" y1="774.8" x2="1165.8" y2="771.6" stroke="#3344cc" stroke-width="1.15"/><line x1="1165.8" y1="771.6" x2="1171.2" y2="768.5" stroke="#1c1c1c" stroke-width="1.15"/><line x1="1171.2" y1="768.5" x2="1171.2" y2="752.3" stroke="#1c1c1c" stroke-width="1.15"/><line x1="1171.2" y1="752.3" x2="1165.6" y2="749.2" stroke="#1c1c1c" stroke-width="1.15"/><line x1="1165.6" y1="749.2" x2="1159.9" y2="746" stroke="#e8201c" stroke-width="1.15"/><line x1="1152.9" y1="746.1" x2="1147.8" y2="749.2" stroke="#e8201c" stroke-width="1.15"/><line x1="1147.8" y1="749.2" x2="1142.7" y2="752.3" stroke="#1c1c1c" stroke-width="1.15"/><line x1="1142.7" y1="752.3" x2="1142.7" y2="768.5" stroke="#1c1c1c" stroke-width="1.15"/><line x1="1142.7" y1="768.5" x2="1148" y2="771.6" stroke="#1c1c1c" stroke-width="1.15"/><line x1="1148" y1="771.6" x2="1153.4" y2="774.8" stroke="#3344cc" stroke-width="1.15"/><line x1="1159.2" y1="840" x2="1162.4" y2="836.9" stroke="#9a8a18" stroke-width="1.15"/><line x1="1162.4" y1="836.9" x2="1165.5" y2="833.7" stroke="#1c1c1c" stroke-width="1.15"/><line x1="1159.8" y1="844.9" x2="1163.7" y2="847.1" stroke="#9a8a18" stroke-width="1.15"/><line x1="1163.7" y1="847.1" x2="1167.5" y2="849.4" stroke="#1c1c1c" stroke-width="1.15"/><text x="1093.1" y="756" font-size="5.1" fill="#222" stroke="none" text-anchor="middle" font-style="italic">(R)</text><text x="1071.8" y="828.1" font-size="5.9" fill="#3344cc" stroke="none" text-anchor="middle">N</text><text x="1086.2" y="852.9" font-size="5.9" fill="#3344cc" stroke="none" text-anchor="middle">N</text><text x="1085.2" y="802.9" font-size="5.9" fill="#3344cc" stroke="none" text-anchor="start">NH</text><text x="1029.7" y="770.6" font-size="5.9" fill="#b8923c" stroke="none" text-anchor="middle">F</text><text x="1086.2" y="770.6" font-size="5.9" fill="#e8201c" stroke="none" text-anchor="middle">O</text><text x="1075.2" y="746.5" font-size="5.3" fill="#1c1c1c" stroke="none" text-anchor="end">H<tspan font-size="3.3" dy="1.2">3</tspan><tspan dy="-1.2">C</tspan></text><text x="1100.5" y="729" font-size="5.9" fill="#b8923c" stroke="none" text-anchor="middle">F</text><text x="1112.6" y="733.5" font-size="5.9" fill="#b8923c" stroke="none" text-anchor="middle">F</text><text x="1114.3" y="754.1" font-size="5.9" fill="#b8923c" stroke="none" text-anchor="middle">F</text><text x="1113.6" y="804.5" font-size="5" fill="#1c1c1c" stroke="none" text-anchor="start">CH<tspan font-size="3.1" dy="1.1">3</tspan></text><text x="1142" y="821" font-size="5.9" fill="#e8201c" stroke="none" text-anchor="middle">O</text><text x="1156.9" y="778.9" font-size="5.9" fill="#3344cc" stroke="none" text-anchor="middle">N</text><text x="1156.4" y="746.2" font-size="5.9" fill="#e8201c" stroke="none" text-anchor="middle">O</text><text x="1143.2" y="852.9" font-size="5.9" fill="#3344cc" stroke="none" text-anchor="middle">N</text><text x="1156.4" y="845" font-size="5.9" fill="#9a8a18" stroke="none" text-anchor="middle">S</text><text x="1156.4" y="829.3" font-size="5.9" fill="#e8201c" stroke="none" text-anchor="middle">O</text><text x="1166.9" y="833.1" font-size="5" fill="#1c1c1c" stroke="none" text-anchor="start">CH<tspan font-size="3.1" dy="1.1">3</tspan></text><text x="1169.4" y="852.9" font-size="5" fill="#1c1c1c" stroke="none" text-anchor="start">CH<tspan font-size="3.1" dy="1.1">3</tspan></text></g></svg>
<div style="left:0;top:930px;width:549px;height:2px;background:#dcdcdc"></div>
<div style="left:37px;top:782px;width:223px;height:148px;background:#d0ffe0"></div>
<span class="t" style="left:0;top:849px;width:36px;text-align:center;font-size:15.500px;">8</span>
<span class="t" style="left:266px;top:849px;font-size:15.500px">85</span>
<span class="t" style="left:346px;top:816px;font-size:15.500px">C</span>
<span class="t" style="left:346px;top:838px;font-size:15.500px">D</span>
<span class="t" style="left:346px;top:861px;font-size:15.500px">20</span>
<span class="t" style="left:346px;top:883px;font-size:15.500px">8</span>
<span class="t" style="left:380px;top:850px;font-size:15.500px;letter-spacing:1px">+</span>
<span class="t" style="left:448px;top:793.5px;font-size:15.500px;">LiHMDS (4.4</span>
<span class="t" style="left:448px;top:816.0px;font-size:15.500px;">eq) was</span>
<span class="t" style="left:448px;top:838.5px;font-size:15.500px;">added to</span>
<span class="t" style="left:448px;top:861.0px;font-size:15.500px;">ethyl</span>
<span class="t" style="left:448px;top:883.5px;font-size:15.500px;letter-spacing:0.300px">1H-benzimid</span>
<span class="t" style="left:448px;top:906.0px;font-size:15.500px;">a<span style="position:static;letter-spacing:-1.400px">...</span></span>
<svg style="left:-956px;top:-84px" width="1626" height="920"><g stroke-linecap="round" fill="none"><line x1="1058.7" y1="873.9" x2="1070.9" y2="882.2" stroke="#1c1c1c" stroke-width="1.15"/><line x1="1058.7" y1="873.9" x2="1047.6" y2="882.2" stroke="#1c1c1c" stroke-width="1.15"/><line x1="1070.9" y1="882.2" x2="1075.5" y2="882.1" stroke="#1c1c1c" stroke-width="1.15"/><line x1="1075.5" y1="882.1" x2="1080.1" y2="882" stroke="#e8201c" stroke-width="1.15"/><line x1="1047.6" y1="882.2" x2="1048.9" y2="887.9" stroke="#1c1c1c" stroke-width="1.15"/><line x1="1048.9" y1="887.9" x2="1050.2" y2="893.6" stroke="#e8201c" stroke-width="1.15"/><line x1="1070.9" y1="882.2" x2="1066.4" y2="896.1" stroke="#1c1c1c" stroke-width="1.15"/><line x1="1085.7" y1="885.7" x2="1088.2" y2="891.6" stroke="#e8201c" stroke-width="1.15"/><line x1="1088.2" y1="891.6" x2="1090.7" y2="897.5" stroke="#1c1c1c" stroke-width="1.15"/><text x="1084.1" y="884.1" font-size="5.9" fill="#e8201c" stroke="none" text-anchor="middle">O</text><text x="1051.1" y="899.7" font-size="5.9" fill="#e8201c" stroke="none" text-anchor="middle">O</text></g></svg>
<div style="left:35px;top:1px;width:2px;height:30px;background:#ececec"></div>
<div style="left:35px;top:32px;width:2px;height:780px;background:#d8d8d8"></div>
<div style="left:260px;top:1px;width:2px;height:30px;background:#ececec"></div>
<div style="left:260px;top:32px;width:2px;height:780px;background:#d8d8d8"></div>
<div style="left:340px;top:1px;width:2px;height:30px;background:#ececec"></div>
<div style="left:340px;top:32px;width:2px;height:780px;background:#d8d8d8"></div>
<div style="left:374px;top:1px;width:1px;height:30px;background:#ececec"></div>
<div style="left:374px;top:32px;width:1px;height:780px;background:#d8d8d8"></div>
<div style="left:443px;top:1px;width:1px;height:30px;background:#ececec"></div>
<div style="left:443px;top:32px;width:1px;height:780px;background:#d8d8d8"></div>
<div style="left:547px;top:1px;width:2px;height:30px;background:#ececec"></div>
<div style="left:547px;top:32px;width:2px;height:780px;background:#d8d8d8"></div>
</div>
<div style="left:1608px;top:84px;width:12px;height:809px;background:#f4f4f4"></div>
<div style="left:1608px;top:247px;width:12px;height:419px;background:#dbdbdb"></div>
<div style="left:1620px;top:84px;width:2px;height:834px;background:#c6c6c6"></div>
<div style="left:955px;top:83px;width:665px;height:1px;background:#c8c8c8"></div>
<div style="left:955px;top:893px;width:665px;height:24px;background:#f2f2f2;border-top:1px solid #c2c2c2"></div>
<div style="left:1254px;top:894px;width:1px;height:23px;background:#c8c8c8"></div>
<span class="t" style="left:956px;top:898px;width:298px;text-align:center;font-size:15.500px;letter-spacing:0.1px;color:#b52a2a">Matching: 6 / 10 (Claim 1)</span>
<span class="t" style="left:1294px;top:898px;font-size:15px;letter-spacing:-0.2px;color:#111">Selected: 1</span>
<div style="left:1186px;top:174px;width:205px;height:33px;background:#fbfbfb;border:1px solid #a4a4a4;box-shadow:2px 2px 4px rgba(0,0,0,0.250)"></div>
<span class="t" style="left:1198px;top:182px;font-size:15.500px;font-weight:bold;letter-spacing:0.24px;color:#111">Match to Markush: <span style="position:static;color:#c02020">false</span></span>
</body></html>
